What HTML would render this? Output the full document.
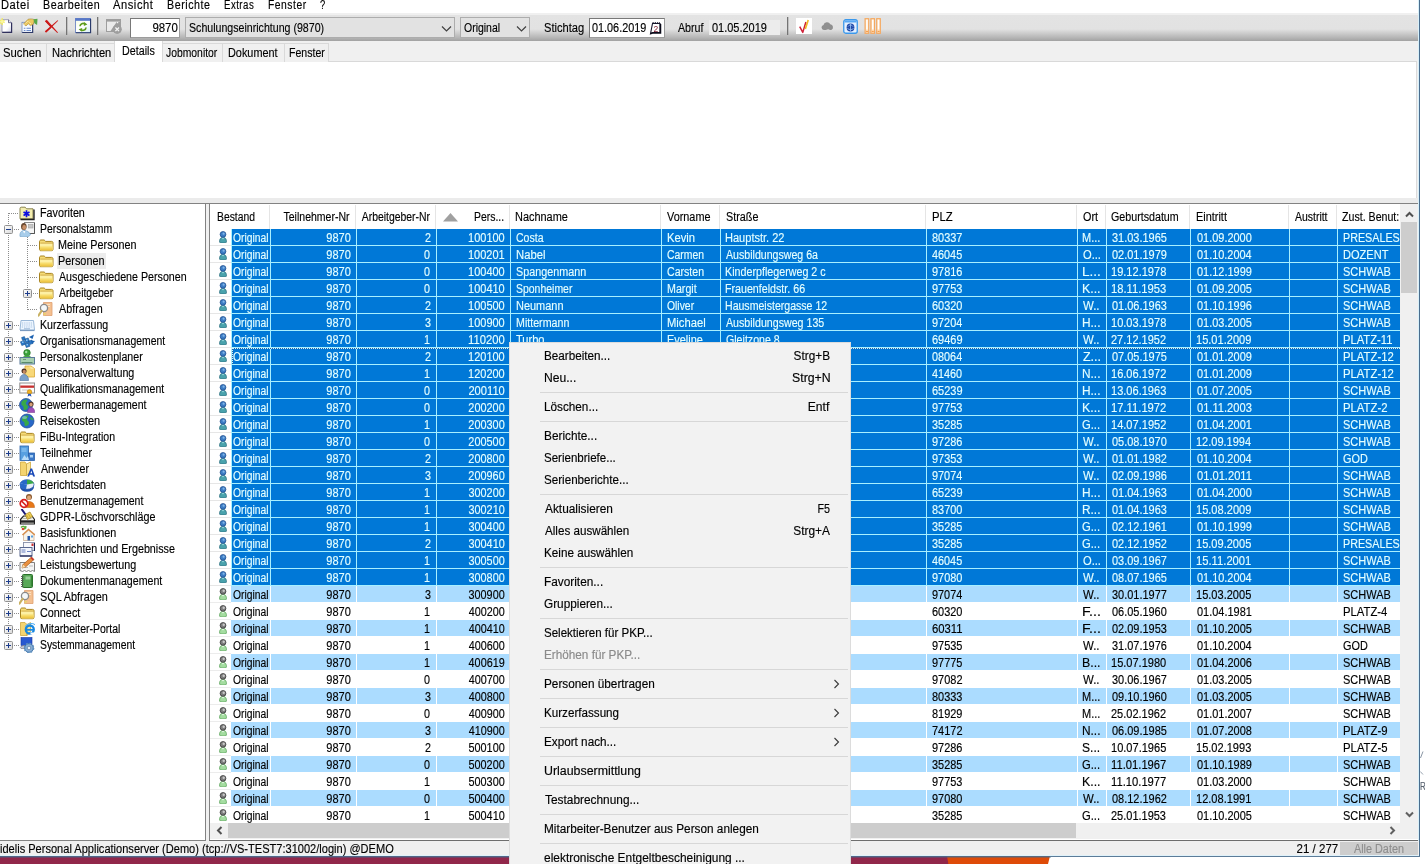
<!DOCTYPE html>
<html lang="de"><head><meta charset="utf-8"><title>fidelis Personal</title>
<style>
html,body{margin:0;padding:0;background:#fff;}
body{width:1425px;height:864px;overflow:hidden;position:relative;font-family:"Liberation Sans",sans-serif;}
#app{position:absolute;left:0;top:0;width:1425px;height:864px;overflow:hidden;will-change:transform;}
#app div,#app span.t,#app svg{position:absolute;box-sizing:border-box;}
span.t{white-space:nowrap;line-height:1;display:block;-webkit-text-stroke:.15px;}
</style></head><body><div id="app">
<svg width="0" height="0" style="left:0;top:0"><defs><linearGradient id="eg" x1="0" y1="0" x2="1" y2="1"><stop offset="0" stop-color="#fff"/><stop offset="1" stop-color="#d8d8d8"/></linearGradient></defs></svg>
<div style="left:0px;top:0px;width:1419px;height:857px;background:#f0f0f0;"></div>
<div style="left:1419px;top:0px;width:1px;height:857px;background:#4a6e8e;"></div>
<div style="left:1418px;top:0px;width:1px;height:857px;background:#d8f0fa;"></div>
<div style="left:0px;top:0px;width:1418px;height:13px;background:#fff;"></div>
<span class="t" style="left:1.11px;top:-1.00px;font-size:12px;color:#000;transform:scaleX(0.9259);transform-origin:0 0;letter-spacing:0.6px;">Datei</span>
<span class="t" style="left:42.54px;top:-1.00px;font-size:12px;color:#000;transform:scaleX(0.8925);transform-origin:0 0;letter-spacing:0.6px;">Bearbeiten</span>
<span class="t" style="left:113.00px;top:-1.00px;font-size:12px;color:#000;transform:scaleX(0.9277);transform-origin:0 0;letter-spacing:0.6px;">Ansicht</span>
<span class="t" style="left:166.55px;top:-1.00px;font-size:12px;color:#000;transform:scaleX(0.8900);transform-origin:0 0;letter-spacing:0.6px;">Berichte</span>
<span class="t" style="left:223.93px;top:-1.00px;font-size:12px;color:#000;transform:scaleX(0.8025);transform-origin:0 0;letter-spacing:0.6px;">Extras</span>
<span class="t" style="left:267.57px;top:-1.00px;font-size:12px;color:#000;transform:scaleX(0.8600);transform-origin:0 0;letter-spacing:0.6px;">Fenster</span>
<span class="t" style="left:319.62px;top:-1.00px;font-size:12px;color:#000;transform:scaleX(0.7812);transform-origin:0 0;letter-spacing:0.6px;">?</span>
<div style="left:0px;top:13px;width:1418px;height:2px;background:#f0f0f0;"></div>
<div style="left:0px;top:15px;width:1418px;height:26px;background:linear-gradient(#e3e3e3 0,#e2e2e2 54%,#cfcfcf 68%,#b8b8b8 85%,#a2a2a2 100%);"></div>
<div style="left:0px;top:41px;width:1418px;height:21px;background:#f0f0f0;"></div>
<div style="left:66px;top:17px;width:1px;height:18px;background:#747474;"></div>
<div style="left:67px;top:17px;width:1px;height:18px;background:#9a9a9a;opacity:.45;"></div>
<div style="left:97px;top:17px;width:1px;height:18px;background:#747474;"></div>
<div style="left:98px;top:17px;width:1px;height:18px;background:#9a9a9a;opacity:.45;"></div>
<div style="left:787px;top:17px;width:1px;height:18px;background:#747474;"></div>
<div style="left:788px;top:17px;width:1px;height:18px;background:#9a9a9a;opacity:.45;"></div>
<div style="left:130px;top:18px;width:50px;height:20px;background:#fff;border:1px solid #787878;border-right-color:#9c9c9c;border-bottom-color:#9c9c9c;"></div>
<span class="t" style="right:1247.10px;top:21.75px;font-size:12.5px;color:#000;transform:scaleX(0.9138);transform-origin:100% 0;">9870</span>
<div style="left:185px;top:17px;width:270px;height:21px;background:#e2e2e2;border:1px solid #adadad;"></div>
<span class="t" style="left:189.02px;top:21.75px;font-size:12.5px;color:#000;transform:scaleX(0.8488);transform-origin:0 0;">Schulungseinrichtung (9870)</span>
<svg style="left:440.5px;top:24.5px;" width="11" height="8" viewBox="0 0 11 8"><path d="M1 1.5 L5.5 6 L10 1.5" fill="none" stroke="#404040" stroke-width="1.2"/></svg>
<div style="left:460px;top:17px;width:70px;height:21px;background:#e2e2e2;border:1px solid #adadad;"></div>
<span class="t" style="left:464.03px;top:21.75px;font-size:12.5px;color:#000;transform:scaleX(0.8383);transform-origin:0 0;">Original</span>
<svg style="left:515.8px;top:24.5px;" width="11" height="8" viewBox="0 0 11 8"><path d="M1 1.5 L5.5 6 L10 1.5" fill="none" stroke="#404040" stroke-width="1.2"/></svg>
<span class="t" style="left:543.80px;top:21.75px;font-size:12.5px;color:#000;transform:scaleX(0.8902);transform-origin:0 0;">Stichtag</span>
<div style="left:589px;top:18px;width:76px;height:20px;background:#fff;border:1px solid #787878;border-right-color:#9c9c9c;border-bottom-color:#9c9c9c;"></div>
<span class="t" style="left:592.42px;top:21.75px;font-size:12.5px;color:#000;transform:scaleX(0.8674);transform-origin:0 0;">01.06.2019</span>
<svg style="left:649px;top:21px;" width="13" height="14" viewBox="0 0 13 14"><path d="M3.500 2.500h7.500v9h-7l-2.500 1.200z" fill="#fff" stroke="#15152a" stroke-width="1.100"/><path d="M11.500 3v9h-8.500l-1.500 1" fill="none" stroke="#0a0a18" stroke-width="1.500"/><path d="M3.500 2h7.500" stroke="#15152a" stroke-width="1.600" stroke-dasharray="1.300 .9"/><text x="4.600" y="10.800" font-size="8.500" font-family="Liberation Sans,sans-serif" fill="#7a1c30">2</text></svg>
<span class="t" style="left:677.70px;top:21.75px;font-size:12.5px;color:#000;transform:scaleX(0.8536);transform-origin:0 0;">Abruf</span>
<div style="left:709px;top:20px;width:71px;height:15px;background:#ececec;"></div>
<span class="t" style="left:711.62px;top:21.75px;font-size:12.5px;color:#000;transform:scaleX(0.8772);transform-origin:0 0;">01.05.2019</span>
<svg style="left:0px;top:17px;" width="14" height="17" viewBox="0 0 14 17"><defs><linearGradient id="nd" x1="0" y1="0" x2="1" y2="1"><stop offset="0" stop-color="#fff"/><stop offset=".6" stop-color="#fff"/><stop offset="1" stop-color="#c8cce0"/></linearGradient></defs><path d="M2 2.700h6.500l3 3v9.600h-9.500z" fill="url(#nd)" stroke="#8a8aa8" stroke-width=".8"/><path d="M8.500 2.700v3h3" fill="#e4e4f0" stroke="#50507a" stroke-width=".8"/><path d="M11.600 5.700v9.700h-9.400" fill="none" stroke="#30305c" stroke-width="1.200"/><path d="M2.200 1v7M0 3.200l4.600 2.400M0 6.400l4.600-3" stroke="#f4ec60" stroke-width="1.300"/><circle cx="2.200" cy="4.500" r="1.500" fill="#fbf7a0"/></svg>
<svg style="left:21px;top:18px;" width="17" height="16" viewBox="0 0 17 16"><rect x="1" y="4.300" width="10.600" height="10" fill="#f6faff" stroke="#7088b8" stroke-width=".8"/><path d="M11.700 4.500v10h-10.500" fill="none" stroke="#2c3868" stroke-width="1.100"/><path d="M2.800 10.300h1.600M5.500 10.300h4.500M2.800 12.500h1.600M5.500 12.500h4.500" stroke="#6c8ccc" stroke-width="1.100"/><path d="M2.500 6l4.500-4.700c2-.6 4.500-.6 6.500.4l-1.200 4.500-2.800 1.500-2.200-2-2.300 2.300z" fill="#ecc860" stroke="#a88838" stroke-width=".6"/><path d="M3.500 6.500l3.500-3.500 3 3" fill="none" stroke="#fff6c8" stroke-width=".9" stroke-dasharray="1 1"/><path d="M12.500 1.300l4-.5-.4 6.200-2.800-1.700z" fill="#58a848"/></svg>
<svg style="left:44px;top:19px;" width="16" height="15" viewBox="0 0 16 15"><path d="M1.200 2.200L2.800.8L14 13.400L13.300 14z" fill="#cc1818"/><path d="M2 13.800L.9 12.200L13.600 1.200L14.200 1.800z" fill="#cc1818"/><path d="M1.500 1.800l6 6.500M1.800 12.800l5.200-4.600" stroke="#cc1818" stroke-width="1.500"/></svg>
<svg style="left:75px;top:18px;" width="17" height="16" viewBox="0 0 17 16"><defs><linearGradient id="rw" x1="0" y1="0" x2="1" y2="1"><stop offset="0" stop-color="#f4fce0"/><stop offset=".5" stop-color="#fff"/><stop offset="1" stop-color="#d8f0f8"/></linearGradient></defs><rect x=".5" y=".5" width="15" height="14" fill="url(#rw)" stroke="#7a90c8"/><rect x=".3" y=".2" width="15.500" height="2.600" fill="#5878c8"/><path d="M15.600 1v13.700H.8" fill="none" stroke="#283868" stroke-width="1.100"/><path d="M5 8.300a3.100 3.100 0 0 1 5-2.200M11 9.500a3.100 3.100 0 0 1-5 2.200" fill="none" stroke="#5c9c1c" stroke-width="1.700"/><path d="M9.200 4l3.200 2.500-3.600 1.400zM6.800 13.800l-3.200-2.500 3.600-1.400z" fill="#5c9c1c"/></svg>
<svg style="left:106px;top:19px;" width="16" height="15" viewBox="0 0 16 15"><rect x="0" y="0" width="15" height="13" fill="#9e9e9e"/><rect x="1" y="2.600" width="13" height="9.400" fill="#ebebeb"/><path d="M3.800 13L10.500 3.200L15 2.600V13z" fill="#9e9e9e"/><circle cx="11.200" cy="10.300" r="4.600" fill="#9e9e9e"/><path d="M9.400 8.500l3.600 3.600M13 8.500l-3.600 3.600" stroke="#f4f4f4" stroke-width="1.300"/><rect x="11" y="3" width="1.200" height="1.200" fill="#f4f4f4"/></svg>
<svg style="left:796px;top:18px;" width="16" height="16" viewBox="0 0 16 16"><rect width="16" height="16" fill="#fff"/><path d="M3.700 8.600L6.800 14.400L9.900 4" stroke="#d02038" stroke-width="1.500" fill="none" stroke-linejoin="round"/><path d="M9.300 11L12.200 2.100" stroke="#f0b828" stroke-width="1.700"/></svg>
<svg style="left:820.5px;top:20.5px;" width="13" height="10" viewBox="0 0 13 10"><path d="M2.800 9a2.600 2.600 0 0 1-.3-5.100a3.600 3.600 0 0 1 6.800-.6a3 3 0 0 1 1 5.700c-1.500.3-2-.8-3.200-.8s-1.800 1-4.300.8z" fill="#8f8f8f"/></svg>
<svg style="left:842.5px;top:18.5px;" width="15" height="15" viewBox="0 0 15 15"><rect x=".75" y=".75" width="13.500" height="13.500" rx="2" fill="#e4f0ff" stroke="#3a98ec" stroke-width="1.300"/><rect x="1.500" y="1.500" width="12" height="2" fill="#58a8f4"/><circle cx="7.500" cy="8.500" r="3.900" fill="#2048a8"/><path d="M5 7.500c1.500-2 3.500-2 5 0M4.500 9.500c2 1.500 4 1.500 6 0M7.500 4.800v7.500" stroke="#9cc4f4" stroke-width=".8" fill="none"/></svg>
<svg style="left:864px;top:18px;" width="18" height="16" viewBox="0 0 18 16"><g fill="#ffe6c8" stroke="#f4a860" stroke-width="1.200"><rect x="1.100" y=".7" width="3.600" height="14.600"/><rect x="6.900" y=".7" width="3.600" height="14.600"/><rect x="12.700" y=".7" width="3.600" height="14.600"/></g><g fill="#fff"><rect x="2.200" y="1.800" width="1.400" height="9.500"/><rect x="8" y="1.800" width="1.400" height="9.500"/><rect x="13.800" y="1.800" width="1.400" height="9.500"/></g><g fill="#f4a050"><rect x="2" y="12.800" width="2" height="1.300"/><rect x="7.800" y="12.800" width="2" height="1.300"/><rect x="13.600" y="12.800" width="2" height="1.300"/></g></svg>
<div style="left:0px;top:61px;width:1417px;height:1px;background:#d9d9d9;"></div>
<div style="left:-1px;top:43px;width:48px;height:19px;border:1px solid #d9d9d9;border-bottom:none;background:#f0f0f0;"></div>
<span class="t" style="left:2.89px;top:46.75px;font-size:12.5px;color:#000;transform:scaleX(0.9035);transform-origin:0 0;">Suchen</span>
<div style="left:46px;top:43px;width:69px;height:19px;border:1px solid #d9d9d9;border-bottom:none;background:#f0f0f0;"></div>
<span class="t" style="left:51.71px;top:46.75px;font-size:12.5px;color:#000;transform:scaleX(0.8885);transform-origin:0 0;">Nachrichten</span>
<div style="left:114px;top:41px;width:49px;height:21px;background:#fff;border:1px solid #d9d9d9;border-bottom:none;border-top:none;"></div>
<span class="t" style="left:121.84px;top:44.75px;font-size:12.5px;color:#000;transform:scaleX(0.8571);transform-origin:0 0;">Details</span>
<div style="left:162px;top:43px;width:61px;height:19px;border:1px solid #d9d9d9;border-bottom:none;background:#f0f0f0;"></div>
<span class="t" style="left:165.84px;top:46.75px;font-size:12.5px;color:#000;transform:scaleX(0.8293);transform-origin:0 0;">Jobmonitor</span>
<div style="left:222px;top:43px;width:63px;height:19px;border:1px solid #d9d9d9;border-bottom:none;background:#f0f0f0;"></div>
<span class="t" style="left:228.43px;top:46.75px;font-size:12.5px;color:#000;transform:scaleX(0.8706);transform-origin:0 0;">Dokument</span>
<div style="left:284px;top:43px;width:45px;height:19px;border:1px solid #d9d9d9;border-bottom:none;background:#f0f0f0;"></div>
<span class="t" style="left:289.36px;top:46.75px;font-size:12.5px;color:#000;transform:scaleX(0.8449);transform-origin:0 0;">Fenster</span>
<div style="left:0px;top:62px;width:1417px;height:136px;background:#fff;border-right:1px solid #dcdcdc;"></div>
<div style="left:0px;top:198px;width:1418px;height:5px;background:#ebebeb;"></div>
<div style="left:0px;top:203px;width:1418px;height:1px;background:#828282;"></div>
<div style="left:0px;top:204px;width:205px;height:636px;background:#fff;"></div>
<div style="left:205px;top:204px;width:1px;height:637px;background:#828282;"></div>
<div style="left:0px;top:840px;width:206px;height:1px;background:#828282;"></div>
<div style="left:206px;top:204px;width:3px;height:637px;background:#f0f0f0;"></div>
<div style="left:8px;top:213px;width:1px;height:432px;background:repeating-linear-gradient(to bottom,#8c8c8c 0,#8c8c8c 1px,transparent 1px,transparent 2px);"></div>
<div style="left:27px;top:237px;width:1px;height:73px;background:repeating-linear-gradient(to bottom,#8c8c8c 0,#8c8c8c 1px,transparent 1px,transparent 2px);"></div>
<div style="left:9px;top:213px;width:10px;height:1px;background:repeating-linear-gradient(to right,#8c8c8c 0,#8c8c8c 1px,transparent 1px,transparent 2px);"></div>
<svg style="left:19px;top:205px;" width="16" height="16" viewBox="0 0 16 16"><path d="M1 3.500c0-.8.500-1.300 1.200-1.300h4l1.300 1.600h6.500v10h-13z" fill="#f4eeb0" stroke="#8a8450" stroke-width="1"/><path d="M1.500 14.500h13.500v-10" fill="none" stroke="#222" stroke-width="1.400"/><g stroke="#1010e0" stroke-width="1.700"><path d="M7.500 5.200v7M4.500 6.900l6 3.600M10.500 6.900l-6 3.600"/></g></svg>
<span class="t" style="left:39.84px;top:206.75px;font-size:12.5px;color:#000;transform:scaleX(0.8606);transform-origin:0 0;">Favoriten</span>
<div style="left:14px;top:229px;width:5px;height:1px;background:repeating-linear-gradient(to right,#8c8c8c 0,#8c8c8c 1px,transparent 1px,transparent 2px);"></div>
<svg style="left:4px;top:225px;" width="9" height="9" viewBox="0 0 9 9"><rect x=".5" y=".5" width="8" height="8" rx="1" fill="url(#eg)" stroke="#919191"/><path d="M2 4.500h5" stroke="#1c3c8c" stroke-width="1"/></svg>
<svg style="left:19px;top:221px;" width="16" height="16" viewBox="0 0 16 16"><rect x="5.500" y="1.500" width="10" height="11" fill="#f6f6f6" stroke="#8a8a8a"/><rect x="9.500" y="3.500" width="4.500" height="3.500" fill="#c8c8c8" stroke="#a0a0a0" stroke-width=".6"/><path d="M15.500 2v10.500h-9" fill="none" stroke="#555" stroke-width="1"/><ellipse cx="4.800" cy="5.500" rx="2.800" ry="3.600" fill="#6a4a32"/><ellipse cx="5.200" cy="6.200" rx="1.900" ry="2.500" fill="#c89068"/><path d="M1 15.500c-.500-4 1.500-6 4-6s5.500 1.500 6.500 4c-1 2-3 2.500-5 2.500z" fill="#a8cdea" stroke="#7aa6cc" stroke-width=".7"/><path d="M4 10l1.200 2.500 1.200-2.500z" fill="#fff"/></svg>
<span class="t" style="left:39.87px;top:222.75px;font-size:12.5px;color:#000;transform:scaleX(0.8300);transform-origin:0 0;">Personalstamm</span>
<div style="left:28px;top:245px;width:10px;height:1px;background:repeating-linear-gradient(to right,#8c8c8c 0,#8c8c8c 1px,transparent 1px,transparent 2px);"></div>
<svg style="left:38px;top:237px;" width="16" height="16" viewBox="0 0 16 16"><path d="M1.500 5c0-1.200.5-2 1.500-2h3.200l1.400 1.400h6c1 0 1.400.6 1.400 1.400v6.400c0 1-.5 1.500-1.400 1.500h-10.700c-.9 0-1.400-.5-1.400-1.500z" fill="#f6dc78" stroke="#a88420" stroke-width="1"/><path d="M2 7.200c0-.6.300-.9.900-.9h10.700c.6 0 .9.300.9.900v4.900c0 .7-.3 1.100-.9 1.100h-10.700c-.6 0-.9-.4-.9-1.100z" fill="#fdf0a4"/><path d="M2 9.500h12.500v2.600c0 .7-.3 1.100-.9 1.100h-10.700c-.6 0-.9-.4-.9-1.100z" fill="#f7dc6c"/><path d="M2 11.500h12.500v.6c0 .7-.3 1.100-.9 1.100h-10.700c-.6 0-.9-.4-.9-1.100z" fill="#f0c848"/><path d="M2.300 6.100h12" stroke="#c8a03c" stroke-width=".8"/></svg>
<span class="t" style="left:58.44px;top:238.75px;font-size:12.5px;color:#000;transform:scaleX(0.8627);transform-origin:0 0;">Meine Personen</span>
<div style="left:28px;top:261px;width:10px;height:1px;background:repeating-linear-gradient(to right,#8c8c8c 0,#8c8c8c 1px,transparent 1px,transparent 2px);"></div>
<div style="left:57px;top:253px;width:49px;height:16px;background:#ececec;"></div>
<svg style="left:38px;top:253px;" width="16" height="16" viewBox="0 0 16 16"><path d="M1.500 5c0-1.200.5-2 1.500-2h3.200l1.400 1.400h6c1 0 1.400.6 1.400 1.400v6.400c0 1-.5 1.500-1.400 1.500h-10.700c-.9 0-1.400-.5-1.400-1.500z" fill="#f6dc78" stroke="#a88420" stroke-width="1"/><path d="M2 7.200c0-.6.300-.9.900-.9h10.700c.6 0 .9.300.9.900v4.900c0 .7-.3 1.100-.9 1.100h-10.700c-.6 0-.9-.4-.9-1.100z" fill="#fdf0a4"/><path d="M2 9.500h12.500v2.600c0 .7-.3 1.100-.9 1.100h-10.700c-.6 0-.9-.4-.9-1.100z" fill="#f7dc6c"/><path d="M2 11.500h12.500v.6c0 .7-.3 1.100-.9 1.100h-10.700c-.6 0-.9-.4-.9-1.100z" fill="#f0c848"/><path d="M2.300 6.100h12" stroke="#c8a03c" stroke-width=".8"/></svg>
<span class="t" style="left:58.43px;top:254.75px;font-size:12.5px;color:#000;transform:scaleX(0.8696);transform-origin:0 0;">Personen</span>
<div style="left:28px;top:277px;width:10px;height:1px;background:repeating-linear-gradient(to right,#8c8c8c 0,#8c8c8c 1px,transparent 1px,transparent 2px);"></div>
<svg style="left:38px;top:269px;" width="16" height="16" viewBox="0 0 16 16"><path d="M1.500 5c0-1.200.5-2 1.500-2h3.200l1.400 1.400h6c1 0 1.400.6 1.400 1.400v6.400c0 1-.5 1.500-1.400 1.500h-10.700c-.9 0-1.400-.5-1.400-1.500z" fill="#f6dc78" stroke="#a88420" stroke-width="1"/><path d="M2 7.200c0-.6.300-.9.900-.9h10.700c.6 0 .9.300.9.900v4.900c0 .7-.3 1.100-.9 1.100h-10.700c-.6 0-.9-.4-.9-1.100z" fill="#fdf0a4"/><path d="M2 9.500h12.500v2.600c0 .7-.3 1.100-.9 1.100h-10.700c-.6 0-.9-.4-.9-1.100z" fill="#f7dc6c"/><path d="M2 11.500h12.500v.6c0 .7-.3 1.100-.9 1.100h-10.700c-.6 0-.9-.4-.9-1.100z" fill="#f0c848"/><path d="M2.300 6.100h12" stroke="#c8a03c" stroke-width=".8"/></svg>
<span class="t" style="left:59.30px;top:270.75px;font-size:12.5px;color:#000;transform:scaleX(0.8545);transform-origin:0 0;">Ausgeschiedene Personen</span>
<div style="left:33px;top:293px;width:5px;height:1px;background:repeating-linear-gradient(to right,#8c8c8c 0,#8c8c8c 1px,transparent 1px,transparent 2px);"></div>
<svg style="left:23px;top:289px;" width="9" height="9" viewBox="0 0 9 9"><rect x=".5" y=".5" width="8" height="8" rx="1" fill="url(#eg)" stroke="#919191"/><path d="M2 4.500h5" stroke="#1c3c8c" stroke-width="1"/><path d="M4.500 2v5" stroke="#1c3c8c" stroke-width="1"/></svg>
<svg style="left:38px;top:285px;" width="16" height="16" viewBox="0 0 16 16"><path d="M1.500 5c0-1.200.5-2 1.500-2h3.200l1.400 1.400h6c1 0 1.400.6 1.400 1.400v6.400c0 1-.5 1.500-1.400 1.500h-10.700c-.9 0-1.400-.5-1.400-1.500z" fill="#f6dc78" stroke="#a88420" stroke-width="1"/><path d="M2 7.200c0-.6.300-.9.900-.9h10.700c.6 0 .9.300.9.900v4.900c0 .7-.3 1.100-.9 1.100h-10.700c-.6 0-.9-.4-.9-1.100z" fill="#fdf0a4"/><path d="M2 9.500h12.500v2.600c0 .7-.3 1.100-.9 1.100h-10.700c-.6 0-.9-.4-.9-1.100z" fill="#f7dc6c"/><path d="M2 11.500h12.500v.6c0 .7-.3 1.100-.9 1.100h-10.700c-.6 0-.9-.4-.9-1.100z" fill="#f0c848"/><path d="M2.300 6.100h12" stroke="#c8a03c" stroke-width=".8"/></svg>
<span class="t" style="left:59.30px;top:286.75px;font-size:12.5px;color:#000;transform:scaleX(0.8380);transform-origin:0 0;">Arbeitgeber</span>
<div style="left:28px;top:309px;width:10px;height:1px;background:repeating-linear-gradient(to right,#8c8c8c 0,#8c8c8c 1px,transparent 1px,transparent 2px);"></div>
<svg style="left:38px;top:301px;" width="16" height="16" viewBox="0 0 16 16"><path d="M5.500 1.500h8.500v13h-8.500z" fill="#f4c090" stroke="#e0a070" stroke-width=".8"/><path d="M7 3.500h5M7 5.500h5" stroke="#fbe0c0" stroke-width="1"/><circle cx="6" cy="7" r="3.600" fill="#f4f8fa" stroke="#8a8a8a" stroke-width="1.300"/><path d="M3.500 10l-3 4.500" stroke="#c8b060" stroke-width="2.200" stroke-linecap="round"/><path d="M5 12l1.500 3 2-3z" fill="#e8d070"/></svg>
<span class="t" style="left:59.30px;top:302.75px;font-size:12.5px;color:#000;transform:scaleX(0.8600);transform-origin:0 0;">Abfragen</span>
<div style="left:14px;top:325px;width:5px;height:1px;background:repeating-linear-gradient(to right,#8c8c8c 0,#8c8c8c 1px,transparent 1px,transparent 2px);"></div>
<svg style="left:4px;top:321px;" width="9" height="9" viewBox="0 0 9 9"><rect x=".5" y=".5" width="8" height="8" rx="1" fill="url(#eg)" stroke="#919191"/><path d="M2 4.500h5" stroke="#1c3c8c" stroke-width="1"/><path d="M4.500 2v5" stroke="#1c3c8c" stroke-width="1"/></svg>
<svg style="left:19px;top:317px;" width="16" height="16" viewBox="0 0 16 16"><path d="M2 3.500h12.500l1 9.500h-14.500z" fill="#eef6ff" stroke="#9ab8d8" stroke-width="1"/><path d="M1 13.500h14.500" stroke="#7a9ac0" stroke-width="1.200"/><g stroke="#a8c4e0" stroke-width="1.100" stroke-dasharray="1.200 1"><path d="M3 6h10.500M3 8h10.800M2.800 10h11.200"/></g><path d="M5 11.800h6" stroke="#9ab8d8" stroke-width="1"/></svg>
<span class="t" style="left:39.85px;top:318.75px;font-size:12.5px;color:#000;transform:scaleX(0.8463);transform-origin:0 0;">Kurzerfassung</span>
<div style="left:14px;top:341px;width:5px;height:1px;background:repeating-linear-gradient(to right,#8c8c8c 0,#8c8c8c 1px,transparent 1px,transparent 2px);"></div>
<svg style="left:4px;top:337px;" width="9" height="9" viewBox="0 0 9 9"><rect x=".5" y=".5" width="8" height="8" rx="1" fill="url(#eg)" stroke="#919191"/><path d="M2 4.500h5" stroke="#1c3c8c" stroke-width="1"/><path d="M4.500 2v5" stroke="#1c3c8c" stroke-width="1"/></svg>
<svg style="left:19px;top:333px;" width="16" height="16" viewBox="0 0 16 16"><g fill="#2a78c8" stroke="#15508a" stroke-width=".5"><rect x="2" y="8" width="4" height="4" transform="rotate(-20 4 10)"/><rect x="6" y="5.500" width="4" height="4" transform="rotate(-20 8 7.500)"/><rect x="6.500" y="10" width="4" height="4" transform="rotate(-20 8.500 12)"/><rect x="10" y="7.500" width="3.500" height="3.500" transform="rotate(-20 12 9)"/><rect x="3" y="4" width="3" height="3" transform="rotate(-20 4.500 5.500)"/></g><path d="M10 4l5-2.500-1.500 4.500z" fill="#1a60b0"/><path d="M12 7.500l4 .5-3 3z" fill="#1a60b0"/><g fill="#8ac4f0"><rect x="3" y="8.500" width="1.500" height="1.500"/><rect x="7" y="6.500" width="1.500" height="1.500"/><rect x="7.500" y="11" width="1.500" height="1.500"/></g></svg>
<span class="t" style="left:40.23px;top:334.75px;font-size:12.5px;color:#000;transform:scaleX(0.8341);transform-origin:0 0;">Organisationsmanagement</span>
<div style="left:14px;top:357px;width:5px;height:1px;background:repeating-linear-gradient(to right,#8c8c8c 0,#8c8c8c 1px,transparent 1px,transparent 2px);"></div>
<svg style="left:4px;top:353px;" width="9" height="9" viewBox="0 0 9 9"><rect x=".5" y=".5" width="8" height="8" rx="1" fill="url(#eg)" stroke="#919191"/><path d="M2 4.500h5" stroke="#1c3c8c" stroke-width="1"/><path d="M4.500 2v5" stroke="#1c3c8c" stroke-width="1"/></svg>
<svg style="left:19px;top:349px;" width="16" height="16" viewBox="0 0 16 16"><circle cx="8" cy="3.800" r="3.300" fill="#38a038" stroke="#1f6a1f" stroke-width=".6"/><circle cx="7.200" cy="3" r="1.200" fill="#a0e0a0"/><path d="M2.500 11c0-3 2.500-4.500 5.500-4.500s5.500 1.500 5.500 4.500z" fill="#48a848"/><rect x="1" y="8.500" width="14.500" height="6.500" fill="#a8d0b0" stroke="#5a7a9a" stroke-width="1"/><path d="M2.500 13.500h11" stroke="#5a8a6a" stroke-width="1"/><path d="M4 10.500h3" stroke="#6a9a7a" stroke-width="1"/></svg>
<span class="t" style="left:39.85px;top:350.75px;font-size:12.5px;color:#000;transform:scaleX(0.8493);transform-origin:0 0;">Personalkostenplaner</span>
<div style="left:14px;top:373px;width:5px;height:1px;background:repeating-linear-gradient(to right,#8c8c8c 0,#8c8c8c 1px,transparent 1px,transparent 2px);"></div>
<svg style="left:4px;top:369px;" width="9" height="9" viewBox="0 0 9 9"><rect x=".5" y=".5" width="8" height="8" rx="1" fill="url(#eg)" stroke="#919191"/><path d="M2 4.500h5" stroke="#1c3c8c" stroke-width="1"/><path d="M4.500 2v5" stroke="#1c3c8c" stroke-width="1"/></svg>
<svg style="left:19px;top:365px;" width="16" height="16" viewBox="0 0 16 16"><path d="M6 1h6l3.500 2.500v8.500h-9.500z" fill="#f8d878" stroke="#d8a838" stroke-width=".8"/><path d="M10 1.500l3 .5 2 2-3 0z" fill="#fce8a0"/><circle cx="5" cy="6" r="2.500" fill="#4a3020"/><ellipse cx="5.300" cy="6.700" rx="1.600" ry="1.900" fill="#c08860"/><path d="M.8 15.500c0-4 1.700-6 4.200-6s4.500 2 4.500 6z" fill="#7aa0c8" stroke="#4a70a0" stroke-width=".6"/></svg>
<span class="t" style="left:39.84px;top:366.75px;font-size:12.5px;color:#000;transform:scaleX(0.8593);transform-origin:0 0;">Personalverwaltung</span>
<div style="left:14px;top:389px;width:5px;height:1px;background:repeating-linear-gradient(to right,#8c8c8c 0,#8c8c8c 1px,transparent 1px,transparent 2px);"></div>
<svg style="left:4px;top:385px;" width="9" height="9" viewBox="0 0 9 9"><rect x=".5" y=".5" width="8" height="8" rx="1" fill="url(#eg)" stroke="#919191"/><path d="M2 4.500h5" stroke="#1c3c8c" stroke-width="1"/><path d="M4.500 2v5" stroke="#1c3c8c" stroke-width="1"/></svg>
<svg style="left:19px;top:381px;" width="16" height="16" viewBox="0 0 16 16"><rect x=".8" y="2" width="14.700" height="10" fill="#fcfcfc" stroke="#909090" stroke-width="1"/><rect x="1.300" y="4.500" width="13.700" height="2.300" fill="#c83030"/><path d="M3 9h9" stroke="#c8c8c8" stroke-width="1"/><circle cx="10.500" cy="11" r="2.300" fill="#f0b020" stroke="#c08000" stroke-width=".6"/><path d="M9.300 12.800l-.8 3 2-1.200 2 1.200-.8-3z" fill="#2858c0"/></svg>
<span class="t" style="left:40.23px;top:382.75px;font-size:12.5px;color:#000;transform:scaleX(0.8387);transform-origin:0 0;">Qualifikationsmanagement</span>
<div style="left:14px;top:405px;width:5px;height:1px;background:repeating-linear-gradient(to right,#8c8c8c 0,#8c8c8c 1px,transparent 1px,transparent 2px);"></div>
<svg style="left:4px;top:401px;" width="9" height="9" viewBox="0 0 9 9"><rect x=".5" y=".5" width="8" height="8" rx="1" fill="url(#eg)" stroke="#919191"/><path d="M2 4.500h5" stroke="#1c3c8c" stroke-width="1"/><path d="M4.500 2v5" stroke="#1c3c8c" stroke-width="1"/></svg>
<svg style="left:19px;top:397px;" width="16" height="16" viewBox="0 0 16 16"><circle cx="7" cy="8" r="6.500" fill="#2868c8" stroke="#184890" stroke-width=".7"/><path d="M2.500 5c2-2.500 4.500-3 6-2-.5 2-1.500 2-1.500 3.500 0 1.500 2 1.500 2 3.500s-2.500 3.500-4 3c-1-1.500 0-3-1-4s-2-.5-1.500-4z" fill="#38a848"/><circle cx="12" cy="7" r="2.600" fill="#5a3828"/><ellipse cx="12" cy="7.600" rx="1.600" ry="1.900" fill="#d8a078"/><path d="M8.500 15.500c0-3.500 1.500-5 3.500-5s3.800 1.500 3.800 5z" fill="#a050b8" stroke="#703088" stroke-width=".5"/></svg>
<span class="t" style="left:39.86px;top:398.75px;font-size:12.5px;color:#000;transform:scaleX(0.8419);transform-origin:0 0;">Bewerbermanagement</span>
<div style="left:14px;top:421px;width:5px;height:1px;background:repeating-linear-gradient(to right,#8c8c8c 0,#8c8c8c 1px,transparent 1px,transparent 2px);"></div>
<svg style="left:4px;top:417px;" width="9" height="9" viewBox="0 0 9 9"><rect x=".5" y=".5" width="8" height="8" rx="1" fill="url(#eg)" stroke="#919191"/><path d="M2 4.500h5" stroke="#1c3c8c" stroke-width="1"/><path d="M4.500 2v5" stroke="#1c3c8c" stroke-width="1"/></svg>
<svg style="left:19px;top:413px;" width="16" height="16" viewBox="0 0 16 16"><circle cx="8" cy="8" r="7" fill="#2868c8" stroke="#184890" stroke-width=".7"/><path d="M3 5c2-2.500 5-3 6.500-2-.5 2-1.500 2-1.500 3.500 0 1.500 2 1.500 2 3.500s-2.500 3.500-4 3c-1-1.500 0-3-1-4s-2.500-.5-2-4z" fill="#38a848"/><path d="M11 4c1.500 0 3 1.500 3.500 3-1 .5-2.500 0-3-1z" fill="#38a848"/><ellipse cx="5.500" cy="4.500" rx="2.500" ry="1.500" fill="#a0d0f8" opacity=".55"/></svg>
<span class="t" style="left:39.83px;top:414.75px;font-size:12.5px;color:#000;transform:scaleX(0.8746);transform-origin:0 0;">Reisekosten</span>
<div style="left:14px;top:437px;width:5px;height:1px;background:repeating-linear-gradient(to right,#8c8c8c 0,#8c8c8c 1px,transparent 1px,transparent 2px);"></div>
<svg style="left:4px;top:433px;" width="9" height="9" viewBox="0 0 9 9"><rect x=".5" y=".5" width="8" height="8" rx="1" fill="url(#eg)" stroke="#919191"/><path d="M2 4.500h5" stroke="#1c3c8c" stroke-width="1"/><path d="M4.500 2v5" stroke="#1c3c8c" stroke-width="1"/></svg>
<svg style="left:19px;top:429px;" width="16" height="16" viewBox="0 0 16 16"><path d="M1.500 5c0-1.200.5-2 1.500-2h3.200l1.400 1.400h6c1 0 1.400.6 1.400 1.400v6.400c0 1-.5 1.500-1.400 1.500h-10.700c-.9 0-1.400-.5-1.400-1.500z" fill="#f6dc78" stroke="#a88420" stroke-width="1"/><path d="M2 7.200c0-.6.300-.9.900-.9h10.700c.6 0 .9.300.9.900v4.900c0 .7-.3 1.100-.9 1.100h-10.700c-.6 0-.9-.4-.9-1.100z" fill="#fdf0a4"/><path d="M2 9.500h12.500v2.600c0 .7-.3 1.100-.9 1.100h-10.700c-.6 0-.9-.4-.9-1.100z" fill="#f7dc6c"/><path d="M2 11.500h12.500v.6c0 .7-.3 1.100-.9 1.100h-10.700c-.6 0-.9-.4-.9-1.100z" fill="#f0c848"/><path d="M2.300 6.100h12" stroke="#c8a03c" stroke-width=".8"/></svg>
<span class="t" style="left:39.86px;top:430.75px;font-size:12.5px;color:#000;transform:scaleX(0.8442);transform-origin:0 0;">FiBu-Integration</span>
<div style="left:14px;top:453px;width:5px;height:1px;background:repeating-linear-gradient(to right,#8c8c8c 0,#8c8c8c 1px,transparent 1px,transparent 2px);"></div>
<svg style="left:4px;top:449px;" width="9" height="9" viewBox="0 0 9 9"><rect x=".5" y=".5" width="8" height="8" rx="1" fill="url(#eg)" stroke="#919191"/><path d="M2 4.500h5" stroke="#1c3c8c" stroke-width="1"/><path d="M4.500 2v5" stroke="#1c3c8c" stroke-width="1"/></svg>
<svg style="left:19px;top:445px;" width="16" height="16" viewBox="0 0 16 16"><rect x="1" y="1" width="8.500" height="14.500" fill="#58a0e0" stroke="#2a60a8" stroke-width=".8"/><rect x="9.500" y="8" width="6" height="7.500" fill="#3a78c8" stroke="#2a60a8" stroke-width=".8"/><path d="M2.500 15l3-5 2 3 1.500-2 1 4z" fill="#b8dcf8"/><rect x="11" y="10" width="3" height="2.500" fill="#a8d0f4"/><rect x="2.500" y="3" width="5" height="4" fill="#88c0f0" opacity=".7"/></svg>
<span class="t" style="left:40.49px;top:446.75px;font-size:12.5px;color:#000;transform:scaleX(0.8510);transform-origin:0 0;">Teilnehmer</span>
<div style="left:14px;top:469px;width:5px;height:1px;background:repeating-linear-gradient(to right,#8c8c8c 0,#8c8c8c 1px,transparent 1px,transparent 2px);"></div>
<svg style="left:4px;top:465px;" width="9" height="9" viewBox="0 0 9 9"><rect x=".5" y=".5" width="8" height="8" rx="1" fill="url(#eg)" stroke="#919191"/><path d="M2 4.500h5" stroke="#1c3c8c" stroke-width="1"/><path d="M4.500 2v5" stroke="#1c3c8c" stroke-width="1"/></svg>
<svg style="left:19px;top:461px;" width="16" height="16" viewBox="0 0 16 16"><path d="M1.500 1h4.500l1.500 2v11.500h-6z" fill="#f4d470" stroke="#c8a030" stroke-width=".7"/><path d="M7.500 3l4-2v10l-4 3.500z" fill="#fae498" stroke="#c8a030" stroke-width=".7"/><path d="M8.300 15.500l3.200-8h1.600l3 8h-2l-.6-1.800h-2.800l-.6 1.800zM11.400 12.200h1.800l-.9-2.700z" fill="#1848b8"/></svg>
<span class="t" style="left:40.70px;top:462.75px;font-size:12.5px;color:#000;transform:scaleX(0.8517);transform-origin:0 0;">Anwender</span>
<div style="left:14px;top:485px;width:5px;height:1px;background:repeating-linear-gradient(to right,#8c8c8c 0,#8c8c8c 1px,transparent 1px,transparent 2px);"></div>
<svg style="left:4px;top:481px;" width="9" height="9" viewBox="0 0 9 9"><rect x=".5" y=".5" width="8" height="8" rx="1" fill="url(#eg)" stroke="#919191"/><path d="M2 4.500h5" stroke="#1c3c8c" stroke-width="1"/><path d="M4.500 2v5" stroke="#1c3c8c" stroke-width="1"/></svg>
<svg style="left:19px;top:477px;" width="16" height="16" viewBox="0 0 16 16"><ellipse cx="8" cy="10" rx="7" ry="4.800" fill="#2050a8"/><ellipse cx="8" cy="7.500" rx="7" ry="4.800" fill="#e8eef8" stroke="#2050a8" stroke-width=".7"/><path d="M8 7.500l-7-1c.8-2.500 3.500-3.800 7-3.800z" fill="#2868c8"/><path d="M8 7.500v-4.800c3.500 0 6 1.300 6.800 3.500z" fill="#38a848"/><path d="M8 7.500l-7-1c-.5 3 2 5.600 6 5.800z" fill="#2868c8"/></svg>
<span class="t" style="left:39.84px;top:478.75px;font-size:12.5px;color:#000;transform:scaleX(0.8623);transform-origin:0 0;">Berichtsdaten</span>
<div style="left:14px;top:501px;width:5px;height:1px;background:repeating-linear-gradient(to right,#8c8c8c 0,#8c8c8c 1px,transparent 1px,transparent 2px);"></div>
<svg style="left:4px;top:497px;" width="9" height="9" viewBox="0 0 9 9"><rect x=".5" y=".5" width="8" height="8" rx="1" fill="url(#eg)" stroke="#919191"/><path d="M2 4.500h5" stroke="#1c3c8c" stroke-width="1"/><path d="M4.500 2v5" stroke="#1c3c8c" stroke-width="1"/></svg>
<svg style="left:19px;top:493px;" width="16" height="16" viewBox="0 0 16 16"><circle cx="10" cy="4" r="3" fill="#8a5a30"/><ellipse cx="10" cy="4.800" rx="2" ry="2.300" fill="#e0a878"/><path d="M5 14.500c0-4 2-6 5-6s5.500 2 5.500 6z" fill="#e87818" stroke="#b85808" stroke-width=".5"/><circle cx="5" cy="10.500" r="3.800" fill="#fff" stroke="#d82020" stroke-width="1.700"/><path d="M2.500 8l5 5" stroke="#d82020" stroke-width="1.700"/></svg>
<span class="t" style="left:39.86px;top:494.75px;font-size:12.5px;color:#000;transform:scaleX(0.8406);transform-origin:0 0;">Benutzermanagement</span>
<div style="left:14px;top:517px;width:5px;height:1px;background:repeating-linear-gradient(to right,#8c8c8c 0,#8c8c8c 1px,transparent 1px,transparent 2px);"></div>
<svg style="left:4px;top:513px;" width="9" height="9" viewBox="0 0 9 9"><rect x=".5" y=".5" width="8" height="8" rx="1" fill="url(#eg)" stroke="#919191"/><path d="M2 4.500h5" stroke="#1c3c8c" stroke-width="1"/><path d="M4.500 2v5" stroke="#1c3c8c" stroke-width="1"/></svg>
<svg style="left:19px;top:509px;" width="16" height="16" viewBox="0 0 16 16"><path d="M1.500 10.500l3-3.500h8.500l2.500 3.500v4.500h-14z" fill="#f0f0e8" stroke="#222" stroke-width="1.200"/><path d="M1.500 12.500h14" stroke="#222" stroke-width="2.400"/><path d="M3.500 9.500h9" stroke="#b8b8a8" stroke-width="1"/><path d="M6 5.500l5-2.500 2.500 4.500-5 3z" fill="#f0d050" stroke="#a08020" stroke-width=".7"/><path d="M7.500 6l2 3.500M9.500 5l2 3.500" stroke="#b89830" stroke-width=".7"/><path d="M2.500 0l4 5.500" stroke="#181878" stroke-width="2"/></svg>
<span class="t" style="left:40.16px;top:510.75px;font-size:12.5px;color:#000;transform:scaleX(0.8606);transform-origin:0 0;">GDPR-Löschvorschläge</span>
<div style="left:14px;top:533px;width:5px;height:1px;background:repeating-linear-gradient(to right,#8c8c8c 0,#8c8c8c 1px,transparent 1px,transparent 2px);"></div>
<svg style="left:4px;top:529px;" width="9" height="9" viewBox="0 0 9 9"><rect x=".5" y=".5" width="8" height="8" rx="1" fill="url(#eg)" stroke="#919191"/><path d="M2 4.500h5" stroke="#1c3c8c" stroke-width="1"/><path d="M4.500 2v5" stroke="#1c3c8c" stroke-width="1"/></svg>
<svg style="left:19px;top:525px;" width="16" height="16" viewBox="0 0 16 16"><path d="M2 2.500c2-2 4-1 4.500 1M6.500 3.500l-2.500.5M6.500 3.500l.5-2.500" stroke="#58b038" stroke-width="1.400" fill="none"/><circle cx="4" cy="4" r="1.300" fill="#d84830"/><path d="M4.500 9.500l5-4.500 5.500 4.500v6h-10.500z" fill="#f8f4ec" stroke="#c8a888" stroke-width=".7"/><path d="M3.500 10l6-5.500 6.500 5.500" fill="none" stroke="#d89050" stroke-width="1.600"/><rect x="8.500" y="11" width="2.500" height="4.500" fill="#2858a8"/><rect x="12" y="10.500" width="2" height="2" fill="#58a0e0"/></svg>
<span class="t" style="left:39.84px;top:526.75px;font-size:12.5px;color:#000;transform:scaleX(0.8636);transform-origin:0 0;">Basisfunktionen</span>
<div style="left:14px;top:549px;width:5px;height:1px;background:repeating-linear-gradient(to right,#8c8c8c 0,#8c8c8c 1px,transparent 1px,transparent 2px);"></div>
<svg style="left:4px;top:545px;" width="9" height="9" viewBox="0 0 9 9"><rect x=".5" y=".5" width="8" height="8" rx="1" fill="url(#eg)" stroke="#919191"/><path d="M2 4.500h5" stroke="#1c3c8c" stroke-width="1"/><path d="M4.500 2v5" stroke="#1c3c8c" stroke-width="1"/></svg>
<svg style="left:19px;top:541px;" width="16" height="16" viewBox="0 0 16 16"><rect x="4.500" y="1.500" width="11" height="8" fill="#f8f8fc" stroke="#8890a8" stroke-width=".9"/><rect x="12.500" y="2.500" width="2" height="2.500" fill="#c83030"/><path d="M15.500 2v8" stroke="#1a2050" stroke-width="1.200"/><rect x="1" y="6.500" width="12" height="8.500" fill="#f4f6fc" stroke="#5a6890" stroke-width="1"/><path d="M2.500 9h4M2.500 11h4M8 10.500h4" stroke="#6a80c0" stroke-width="1"/><path d="M1 15h12" stroke="#2a3060" stroke-width="1.300"/></svg>
<span class="t" style="left:39.84px;top:542.75px;font-size:12.5px;color:#000;transform:scaleX(0.8592);transform-origin:0 0;">Nachrichten und Ergebnisse</span>
<div style="left:14px;top:565px;width:5px;height:1px;background:repeating-linear-gradient(to right,#8c8c8c 0,#8c8c8c 1px,transparent 1px,transparent 2px);"></div>
<svg style="left:4px;top:561px;" width="9" height="9" viewBox="0 0 9 9"><rect x=".5" y=".5" width="8" height="8" rx="1" fill="url(#eg)" stroke="#919191"/><path d="M2 4.500h5" stroke="#1c3c8c" stroke-width="1"/><path d="M4.500 2v5" stroke="#1c3c8c" stroke-width="1"/></svg>
<svg style="left:19px;top:557px;" width="16" height="16" viewBox="0 0 16 16"><path d="M1 5.500h14.500v9l-2-1-2 1-2-1-2 1-2-1-2 1-2.500-1z" fill="#f4f4f4" stroke="#808080" stroke-width="1"/><path d="M3 8h4M3 10.500h6M10 9h4" stroke="#b8b8b8" stroke-width="1.100"/><path d="M3 11l1-3.500 8.500-7.500 2.500 2.500-8.500 7.500z" fill="#e89040" stroke="#a85818" stroke-width=".7"/><path d="M3 11l1-3.500 2.500 2.500z" fill="#f8e0b0"/><path d="M11.500 1l2.500 2.500 1-1-2.500-2.500z" fill="#c83030"/></svg>
<span class="t" style="left:39.84px;top:558.75px;font-size:12.5px;color:#000;transform:scaleX(0.8599);transform-origin:0 0;">Leistungsbewertung</span>
<div style="left:14px;top:581px;width:5px;height:1px;background:repeating-linear-gradient(to right,#8c8c8c 0,#8c8c8c 1px,transparent 1px,transparent 2px);"></div>
<svg style="left:4px;top:577px;" width="9" height="9" viewBox="0 0 9 9"><rect x=".5" y=".5" width="8" height="8" rx="1" fill="url(#eg)" stroke="#919191"/><path d="M2 4.500h5" stroke="#1c3c8c" stroke-width="1"/><path d="M4.500 2v5" stroke="#1c3c8c" stroke-width="1"/></svg>
<svg style="left:19px;top:573px;" width="16" height="16" viewBox="0 0 16 16"><rect x="3.500" y="1.500" width="10" height="13" rx="1" fill="#58a858" stroke="#2a702a" stroke-width="1"/><rect x="6.500" y="3.500" width="5" height="3" fill="#98d098"/><path d="M12.500 2.500v11" stroke="#388838" stroke-width="1.400"/><g stroke="#555" stroke-width=".9"><path d="M2 3.500h2.500M2 5.500h2.500M2 7.500h2.500M2 9.500h2.500M2 11.500h2.500M2 13.500h2.500"/></g></svg>
<span class="t" style="left:39.85px;top:574.75px;font-size:12.5px;color:#000;transform:scaleX(0.8501);transform-origin:0 0;">Dokumentenmanagement</span>
<div style="left:14px;top:597px;width:5px;height:1px;background:repeating-linear-gradient(to right,#8c8c8c 0,#8c8c8c 1px,transparent 1px,transparent 2px);"></div>
<svg style="left:4px;top:593px;" width="9" height="9" viewBox="0 0 9 9"><rect x=".5" y=".5" width="8" height="8" rx="1" fill="url(#eg)" stroke="#919191"/><path d="M2 4.500h5" stroke="#1c3c8c" stroke-width="1"/><path d="M4.500 2v5" stroke="#1c3c8c" stroke-width="1"/></svg>
<svg style="left:19px;top:589px;" width="16" height="16" viewBox="0 0 16 16"><path d="M5.500 1.500h8.500v13h-8.500z" fill="#f4c090" stroke="#e0a070" stroke-width=".8"/><path d="M7 3.500h5M7 5.500h5" stroke="#fbe0c0" stroke-width="1"/><circle cx="6" cy="7" r="3.600" fill="#f4f8fa" stroke="#8a8a8a" stroke-width="1.300"/><path d="M3.500 10l-3 4.500" stroke="#c8b060" stroke-width="2.200" stroke-linecap="round"/><path d="M5 12l1.500 3 2-3z" fill="#e8d070"/></svg>
<span class="t" style="left:40.21px;top:590.75px;font-size:12.5px;color:#000;transform:scaleX(0.8691);transform-origin:0 0;">SQL Abfragen</span>
<div style="left:14px;top:613px;width:5px;height:1px;background:repeating-linear-gradient(to right,#8c8c8c 0,#8c8c8c 1px,transparent 1px,transparent 2px);"></div>
<svg style="left:4px;top:609px;" width="9" height="9" viewBox="0 0 9 9"><rect x=".5" y=".5" width="8" height="8" rx="1" fill="url(#eg)" stroke="#919191"/><path d="M2 4.500h5" stroke="#1c3c8c" stroke-width="1"/><path d="M4.500 2v5" stroke="#1c3c8c" stroke-width="1"/></svg>
<svg style="left:19px;top:605px;" width="16" height="16" viewBox="0 0 16 16"><path d="M1.500 5c0-1.200.5-2 1.500-2h3.200l1.400 1.400h6c1 0 1.400.6 1.400 1.400v6.400c0 1-.5 1.500-1.400 1.500h-10.700c-.9 0-1.400-.5-1.400-1.500z" fill="#f6dc78" stroke="#a88420" stroke-width="1"/><path d="M2 7.200c0-.6.300-.9.900-.9h10.700c.6 0 .9.300.9.900v4.900c0 .7-.3 1.100-.9 1.100h-10.700c-.6 0-.9-.4-.9-1.100z" fill="#fdf0a4"/><path d="M2 9.500h12.500v2.600c0 .7-.3 1.100-.9 1.100h-10.700c-.6 0-.9-.4-.9-1.100z" fill="#f7dc6c"/><path d="M2 11.500h12.500v.6c0 .7-.3 1.100-.9 1.100h-10.700c-.6 0-.9-.4-.9-1.100z" fill="#f0c848"/><path d="M2.300 6.100h12" stroke="#c8a03c" stroke-width=".8"/></svg>
<span class="t" style="left:40.16px;top:606.75px;font-size:12.5px;color:#000;transform:scaleX(0.8654);transform-origin:0 0;">Connect</span>
<div style="left:14px;top:629px;width:5px;height:1px;background:repeating-linear-gradient(to right,#8c8c8c 0,#8c8c8c 1px,transparent 1px,transparent 2px);"></div>
<svg style="left:4px;top:625px;" width="9" height="9" viewBox="0 0 9 9"><rect x=".5" y=".5" width="8" height="8" rx="1" fill="url(#eg)" stroke="#919191"/><path d="M2 4.500h5" stroke="#1c3c8c" stroke-width="1"/><path d="M4.500 2v5" stroke="#1c3c8c" stroke-width="1"/></svg>
<svg style="left:19px;top:621px;" width="16" height="16" viewBox="0 0 16 16"><path d="M1.500 1.500h4.500l2 2v11h-6.500z" fill="#f4d470" stroke="#c8a030" stroke-width=".7"/><path d="M8 3.500l3.500-2v9l-3.500 4z" fill="#fae498" stroke="#c8a030" stroke-width=".7"/><circle cx="10.800" cy="8.500" r="4" fill="none" stroke="#1888e0" stroke-width="2.300"/><path d="M7 8.800h8" stroke="#1888e0" stroke-width="1.800"/><path d="M11.500 11.500h4.500v2h-4.500z" fill="#fff"/><path d="M6 5.500c3-3.500 8-4 10-1.500" fill="none" stroke="#58b0f0" stroke-width="1.100"/></svg>
<span class="t" style="left:39.86px;top:622.75px;font-size:12.5px;color:#000;transform:scaleX(0.8388);transform-origin:0 0;">Mitarbeiter-Portal</span>
<div style="left:14px;top:645px;width:5px;height:1px;background:repeating-linear-gradient(to right,#8c8c8c 0,#8c8c8c 1px,transparent 1px,transparent 2px);"></div>
<svg style="left:4px;top:641px;" width="9" height="9" viewBox="0 0 9 9"><rect x=".5" y=".5" width="8" height="8" rx="1" fill="url(#eg)" stroke="#919191"/><path d="M2 4.500h5" stroke="#1c3c8c" stroke-width="1"/><path d="M4.500 2v5" stroke="#1c3c8c" stroke-width="1"/></svg>
<svg style="left:19px;top:637px;" width="16" height="16" viewBox="0 0 16 16"><rect x="2" y=".5" width="11" height="8" fill="#2858d0" stroke="#1838a0" stroke-width=".6"/><path d="M1 10.500l3-2h6l-1 3h-7z" fill="#c8c8d0" stroke="#707080" stroke-width=".6"/><circle cx="10" cy="11" r="4.300" fill="#88b0d8" stroke="#4878a8" stroke-width="1"/><circle cx="10" cy="11" r="4.600" fill="none" stroke="#6090c0" stroke-width="1.500" stroke-dasharray="1.800 1.800"/><circle cx="10" cy="11" r="1.800" fill="#e8f0f8" stroke="#4a6a90" stroke-width=".6"/></svg>
<span class="t" style="left:40.23px;top:638.75px;font-size:12.5px;color:#000;transform:scaleX(0.8302);transform-origin:0 0;">Systemmanagement</span>
<div style="left:209px;top:204px;width:1px;height:637px;background:#828282;"></div>
<div style="left:209px;top:840px;width:1209px;height:1px;background:#6e6e6e;"></div>
<div style="left:210px;top:204px;width:1208px;height:636px;background:#fff;"></div>
<span class="t" style="left:216.97px;top:210.75px;font-size:12.5px;color:#000;transform:scaleX(0.8272);transform-origin:0 0;">Bestand</span>
<span class="t" style="right:1075.15px;top:210.75px;font-size:12.5px;color:#000;transform:scaleX(0.8404);transform-origin:100% 0;">Teilnehmer-Nr</span>
<span class="t" style="right:995.16px;top:210.75px;font-size:12.5px;color:#000;transform:scaleX(0.8324);transform-origin:100% 0;">Arbeitgeber-Nr</span>
<span class="t" style="right:920.86px;top:210.75px;font-size:12.5px;color:#000;transform:scaleX(0.8353);transform-origin:100% 0;">Pers...</span>
<span class="t" style="left:515.13px;top:210.75px;font-size:12.5px;color:#000;transform:scaleX(0.8738);transform-origin:0 0;">Nachname</span>
<span class="t" style="left:667.00px;top:210.75px;font-size:12.5px;color:#000;transform:scaleX(0.8687);transform-origin:0 0;">Vorname</span>
<span class="t" style="left:725.51px;top:210.75px;font-size:12.5px;color:#000;transform:scaleX(0.8645);transform-origin:0 0;">Straße</span>
<span class="t" style="left:931.50px;top:210.75px;font-size:12.5px;color:#000;transform:scaleX(0.9043);transform-origin:0 0;">PLZ</span>
<span class="t" style="left:1082.51px;top:210.75px;font-size:12.5px;color:#000;transform:scaleX(0.8657);transform-origin:0 0;">Ort</span>
<span class="t" style="left:1111.47px;top:210.75px;font-size:12.5px;color:#000;transform:scaleX(0.8546);transform-origin:0 0;">Geburtsdatum</span>
<span class="t" style="left:1196.13px;top:210.75px;font-size:12.5px;color:#000;transform:scaleX(0.8727);transform-origin:0 0;">Eintritt</span>
<span class="t" style="left:1294.80px;top:210.75px;font-size:12.5px;color:#000;transform:scaleX(0.8360);transform-origin:0 0;">Austritt</span>
<span class="t" style="left:1342.18px;top:210.75px;font-size:12.5px;color:#000;transform:scaleX(0.8493);transform-origin:0 0;">Zust. Benut:</span>
<div style="left:269px;top:205px;width:1px;height:24px;background:#e5e5e5;"></div>
<div style="left:355px;top:205px;width:1px;height:24px;background:#e5e5e5;"></div>
<div style="left:435px;top:205px;width:1px;height:24px;background:#e5e5e5;"></div>
<div style="left:509px;top:205px;width:1px;height:24px;background:#e5e5e5;"></div>
<div style="left:660px;top:205px;width:1px;height:24px;background:#e5e5e5;"></div>
<div style="left:719px;top:205px;width:1px;height:24px;background:#e5e5e5;"></div>
<div style="left:925px;top:205px;width:1px;height:24px;background:#e5e5e5;"></div>
<div style="left:1076px;top:205px;width:1px;height:24px;background:#e5e5e5;"></div>
<div style="left:1105px;top:205px;width:1px;height:24px;background:#e5e5e5;"></div>
<div style="left:1189px;top:205px;width:1px;height:24px;background:#e5e5e5;"></div>
<div style="left:1288px;top:205px;width:1px;height:24px;background:#e5e5e5;"></div>
<div style="left:1336px;top:205px;width:1px;height:24px;background:#e5e5e5;"></div>
<svg style="left:442px;top:212px;" width="17" height="10" viewBox="0 0 17 10"><path d="M1 9.500L8.500 1L16 9.500z" fill="#a0a0a0"/></svg>
<div style="left:231px;top:229px;width:1169px;height:16px;background:#0078d7;"></div>
<div style="left:231px;top:245px;width:1169px;height:1px;background:#a8f0ff;"></div>
<div style="left:210px;top:245px;width:21px;height:1px;background:#e6e6e6;"></div>
<svg style="left:219px;top:231px;" width="8" height="12" viewBox="0 0 8 12"><path d="M.6 11.300c-.4-3.300 1.200-5 3.400-5s3.800 1.700 3.400 5c-1.300 1-5.500 1-6.800 0z" fill="#4aa2ac" stroke="#2a6c7c" stroke-width=".7"/><path d="M2.700 6.800l1.300 1.800 1.300-1.800z" fill="#a0dce0"/><circle cx="4" cy="3.400" r="2.900" fill="#3c7cc4" stroke="#1a4888" stroke-width=".7"/><circle cx="4.600" cy="2.700" r="1.100" fill="#80b4e8"/></svg>
<span class="t" style="left:233.24px;top:231.75px;font-size:12.5px;color:#e4ffff;transform:scaleX(0.8263);transform-origin:0 0;">Original</span>
<span class="t" style="right:1074.62px;top:231.75px;font-size:12.5px;color:#e4ffff;transform:scaleX(0.8802);transform-origin:100% 0;">9870</span>
<span class="t" style="right:994.50px;top:231.75px;font-size:12.5px;color:#e4ffff;transform:scaleX(0.8600);transform-origin:100% 0;">2</span>
<span class="t" style="right:920.29px;top:231.75px;font-size:12.5px;color:#e4ffff;transform:scaleX(0.8781);transform-origin:100% 0;">100100</span>
<span class="t" style="left:515.87px;top:231.75px;font-size:12.5px;color:#e4ffff;transform:scaleX(0.8421);transform-origin:0 0;">Costa</span>
<span class="t" style="left:666.60px;top:231.75px;font-size:12.5px;color:#e4ffff;transform:scaleX(0.8983);transform-origin:0 0;">Kevin</span>
<span class="t" style="left:725.42px;top:231.75px;font-size:12.5px;color:#e4ffff;transform:scaleX(0.8828);transform-origin:0 0;">Hauptstr. 22</span>
<span class="t" style="left:931.86px;top:231.75px;font-size:12.5px;color:#e4ffff;transform:scaleX(0.8757);transform-origin:0 0;">80337</span>
<span class="t" style="left:1082.12px;top:231.75px;font-size:12.5px;color:#e4ffff;transform:scaleX(0.8800);transform-origin:0 0;">M...</span>
<span class="t" style="left:1111.62px;top:231.75px;font-size:12.5px;color:#e4ffff;transform:scaleX(0.8763);transform-origin:0 0;">31.03.1965</span>
<span class="t" style="left:1196.62px;top:231.75px;font-size:12.5px;color:#e4ffff;transform:scaleX(0.8754);transform-origin:0 0;">01.09.2000</span>
<span class="t" style="left:1342.84px;top:231.75px;font-size:12.5px;color:#e4ffff;transform:scaleX(0.8605);transform-origin:0 0;">PRESALES</span>
<div style="left:231px;top:246px;width:1169px;height:16px;background:#0078d7;"></div>
<div style="left:231px;top:262px;width:1169px;height:1px;background:#a8f0ff;"></div>
<div style="left:210px;top:262px;width:21px;height:1px;background:#e6e6e6;"></div>
<svg style="left:219px;top:248px;" width="8" height="12" viewBox="0 0 8 12"><path d="M.6 11.300c-.4-3.300 1.200-5 3.400-5s3.800 1.700 3.400 5c-1.300 1-5.500 1-6.800 0z" fill="#4aa2ac" stroke="#2a6c7c" stroke-width=".7"/><path d="M2.700 6.800l1.300 1.800 1.300-1.800z" fill="#a0dce0"/><circle cx="4" cy="3.400" r="2.900" fill="#3c7cc4" stroke="#1a4888" stroke-width=".7"/><circle cx="4.600" cy="2.700" r="1.100" fill="#80b4e8"/></svg>
<span class="t" style="left:233.24px;top:248.75px;font-size:12.5px;color:#e4ffff;transform:scaleX(0.8263);transform-origin:0 0;">Original</span>
<span class="t" style="right:1074.62px;top:248.75px;font-size:12.5px;color:#e4ffff;transform:scaleX(0.8802);transform-origin:100% 0;">9870</span>
<span class="t" style="right:994.61px;top:248.75px;font-size:12.5px;color:#e4ffff;transform:scaleX(0.8600);transform-origin:100% 0;">0</span>
<span class="t" style="right:920.18px;top:248.75px;font-size:12.5px;color:#e4ffff;transform:scaleX(0.8809);transform-origin:100% 0;">100201</span>
<span class="t" style="left:515.50px;top:248.75px;font-size:12.5px;color:#e4ffff;transform:scaleX(0.9004);transform-origin:0 0;">Nabel</span>
<span class="t" style="left:666.98px;top:248.75px;font-size:12.5px;color:#e4ffff;transform:scaleX(0.8337);transform-origin:0 0;">Carmen</span>
<span class="t" style="left:726.30px;top:248.75px;font-size:12.5px;color:#e4ffff;transform:scaleX(0.8484);transform-origin:0 0;">Ausbildungsweg 6a</span>
<span class="t" style="left:932.08px;top:248.75px;font-size:12.5px;color:#e4ffff;transform:scaleX(0.8676);transform-origin:0 0;">46045</span>
<span class="t" style="left:1082.50px;top:248.75px;font-size:12.5px;color:#e4ffff;transform:scaleX(0.8919);transform-origin:0 0;">O...</span>
<span class="t" style="left:1111.62px;top:248.75px;font-size:12.5px;color:#e4ffff;transform:scaleX(0.8772);transform-origin:0 0;">02.01.1979</span>
<span class="t" style="left:1196.62px;top:248.75px;font-size:12.5px;color:#e4ffff;transform:scaleX(0.8736);transform-origin:0 0;">01.10.2004</span>
<span class="t" style="left:1342.82px;top:248.75px;font-size:12.5px;color:#e4ffff;transform:scaleX(0.8838);transform-origin:0 0;">DOZENT</span>
<div style="left:231px;top:263px;width:1169px;height:16px;background:#0078d7;"></div>
<div style="left:231px;top:279px;width:1169px;height:1px;background:#a8f0ff;"></div>
<div style="left:210px;top:279px;width:21px;height:1px;background:#e6e6e6;"></div>
<svg style="left:219px;top:265px;" width="8" height="12" viewBox="0 0 8 12"><path d="M.6 11.300c-.4-3.300 1.200-5 3.400-5s3.800 1.700 3.400 5c-1.300 1-5.500 1-6.800 0z" fill="#4aa2ac" stroke="#2a6c7c" stroke-width=".7"/><path d="M2.700 6.800l1.300 1.800 1.300-1.800z" fill="#a0dce0"/><circle cx="4" cy="3.400" r="2.900" fill="#3c7cc4" stroke="#1a4888" stroke-width=".7"/><circle cx="4.600" cy="2.700" r="1.100" fill="#80b4e8"/></svg>
<span class="t" style="left:233.24px;top:265.75px;font-size:12.5px;color:#e4ffff;transform:scaleX(0.8263);transform-origin:0 0;">Original</span>
<span class="t" style="right:1074.62px;top:265.75px;font-size:12.5px;color:#e4ffff;transform:scaleX(0.8802);transform-origin:100% 0;">9870</span>
<span class="t" style="right:994.61px;top:265.75px;font-size:12.5px;color:#e4ffff;transform:scaleX(0.8600);transform-origin:100% 0;">0</span>
<span class="t" style="right:920.29px;top:265.75px;font-size:12.5px;color:#e4ffff;transform:scaleX(0.8781);transform-origin:100% 0;">100400</span>
<span class="t" style="left:515.91px;top:265.75px;font-size:12.5px;color:#e4ffff;transform:scaleX(0.8625);transform-origin:0 0;">Spangenmann</span>
<span class="t" style="left:666.97px;top:265.75px;font-size:12.5px;color:#e4ffff;transform:scaleX(0.8472);transform-origin:0 0;">Carsten</span>
<span class="t" style="left:725.44px;top:265.75px;font-size:12.5px;color:#e4ffff;transform:scaleX(0.8568);transform-origin:0 0;">Kinderpflegerweg 2 c</span>
<span class="t" style="left:931.81px;top:265.75px;font-size:12.5px;color:#e4ffff;transform:scaleX(0.8757);transform-origin:0 0;">97816</span>
<span class="t" style="left:1081.92px;top:265.75px;font-size:12.5px;color:#e4ffff;transform:scaleX(1.0820);transform-origin:0 0;">L...</span>
<span class="t" style="left:1111.17px;top:265.75px;font-size:12.5px;color:#e4ffff;transform:scaleX(0.8834);transform-origin:0 0;">19.12.1978</span>
<span class="t" style="left:1196.62px;top:265.75px;font-size:12.5px;color:#e4ffff;transform:scaleX(0.8772);transform-origin:0 0;">01.12.1999</span>
<span class="t" style="left:1343.21px;top:265.75px;font-size:12.5px;color:#e4ffff;transform:scaleX(0.8799);transform-origin:0 0;">SCHWAB</span>
<div style="left:231px;top:280px;width:1169px;height:16px;background:#0078d7;"></div>
<div style="left:231px;top:296px;width:1169px;height:1px;background:#a8f0ff;"></div>
<div style="left:210px;top:296px;width:21px;height:1px;background:#e6e6e6;"></div>
<svg style="left:219px;top:282px;" width="8" height="12" viewBox="0 0 8 12"><path d="M.6 11.300c-.4-3.300 1.200-5 3.400-5s3.800 1.700 3.400 5c-1.300 1-5.500 1-6.800 0z" fill="#4aa2ac" stroke="#2a6c7c" stroke-width=".7"/><path d="M2.700 6.800l1.300 1.800 1.300-1.800z" fill="#a0dce0"/><circle cx="4" cy="3.400" r="2.900" fill="#3c7cc4" stroke="#1a4888" stroke-width=".7"/><circle cx="4.600" cy="2.700" r="1.100" fill="#80b4e8"/></svg>
<span class="t" style="left:233.24px;top:282.75px;font-size:12.5px;color:#e4ffff;transform:scaleX(0.8263);transform-origin:0 0;">Original</span>
<span class="t" style="right:1074.62px;top:282.75px;font-size:12.5px;color:#e4ffff;transform:scaleX(0.8802);transform-origin:100% 0;">9870</span>
<span class="t" style="right:994.61px;top:282.75px;font-size:12.5px;color:#e4ffff;transform:scaleX(0.8600);transform-origin:100% 0;">0</span>
<span class="t" style="right:920.29px;top:282.75px;font-size:12.5px;color:#e4ffff;transform:scaleX(0.8781);transform-origin:100% 0;">100410</span>
<span class="t" style="left:515.93px;top:282.75px;font-size:12.5px;color:#e4ffff;transform:scaleX(0.8367);transform-origin:0 0;">Sponheimer</span>
<span class="t" style="left:666.65px;top:282.75px;font-size:12.5px;color:#e4ffff;transform:scaleX(0.8549);transform-origin:0 0;">Margit</span>
<span class="t" style="left:725.45px;top:282.75px;font-size:12.5px;color:#e4ffff;transform:scaleX(0.8536);transform-origin:0 0;">Frauenfeldstr. 66</span>
<span class="t" style="left:931.81px;top:282.75px;font-size:12.5px;color:#e4ffff;transform:scaleX(0.8757);transform-origin:0 0;">97753</span>
<span class="t" style="left:1082.01px;top:282.75px;font-size:12.5px;color:#e4ffff;transform:scaleX(0.9888);transform-origin:0 0;">K...</span>
<span class="t" style="left:1111.16px;top:282.75px;font-size:12.5px;color:#e4ffff;transform:scaleX(0.8972);transform-origin:0 0;">18.11.1953</span>
<span class="t" style="left:1196.62px;top:282.75px;font-size:12.5px;color:#e4ffff;transform:scaleX(0.8763);transform-origin:0 0;">01.09.2005</span>
<span class="t" style="left:1343.21px;top:282.75px;font-size:12.5px;color:#e4ffff;transform:scaleX(0.8799);transform-origin:0 0;">SCHWAB</span>
<div style="left:231px;top:297px;width:1169px;height:16px;background:#0078d7;"></div>
<div style="left:231px;top:313px;width:1169px;height:1px;background:#a8f0ff;"></div>
<div style="left:210px;top:313px;width:21px;height:1px;background:#e6e6e6;"></div>
<svg style="left:219px;top:299px;" width="8" height="12" viewBox="0 0 8 12"><path d="M.6 11.300c-.4-3.300 1.200-5 3.400-5s3.800 1.700 3.400 5c-1.300 1-5.500 1-6.800 0z" fill="#4aa2ac" stroke="#2a6c7c" stroke-width=".7"/><path d="M2.700 6.800l1.300 1.800 1.300-1.800z" fill="#a0dce0"/><circle cx="4" cy="3.400" r="2.900" fill="#3c7cc4" stroke="#1a4888" stroke-width=".7"/><circle cx="4.600" cy="2.700" r="1.100" fill="#80b4e8"/></svg>
<span class="t" style="left:233.24px;top:299.75px;font-size:12.5px;color:#e4ffff;transform:scaleX(0.8263);transform-origin:0 0;">Original</span>
<span class="t" style="right:1074.62px;top:299.75px;font-size:12.5px;color:#e4ffff;transform:scaleX(0.8802);transform-origin:100% 0;">9870</span>
<span class="t" style="right:994.50px;top:299.75px;font-size:12.5px;color:#e4ffff;transform:scaleX(0.8600);transform-origin:100% 0;">2</span>
<span class="t" style="right:920.29px;top:299.75px;font-size:12.5px;color:#e4ffff;transform:scaleX(0.8781);transform-origin:100% 0;">100500</span>
<span class="t" style="left:515.52px;top:299.75px;font-size:12.5px;color:#e4ffff;transform:scaleX(0.8772);transform-origin:0 0;">Neumann</span>
<span class="t" style="left:667.03px;top:299.75px;font-size:12.5px;color:#e4ffff;transform:scaleX(0.8297);transform-origin:0 0;">Oliver</span>
<span class="t" style="left:725.46px;top:299.75px;font-size:12.5px;color:#e4ffff;transform:scaleX(0.8448);transform-origin:0 0;">Hausmeistergasse 12</span>
<span class="t" style="left:931.75px;top:299.75px;font-size:12.5px;color:#e4ffff;transform:scaleX(0.8757);transform-origin:0 0;">60320</span>
<span class="t" style="left:1083.00px;top:299.75px;font-size:12.5px;color:#e4ffff;transform:scaleX(0.9151);transform-origin:0 0;">W..</span>
<span class="t" style="left:1111.62px;top:299.75px;font-size:12.5px;color:#e4ffff;transform:scaleX(0.8763);transform-origin:0 0;">01.06.1963</span>
<span class="t" style="left:1196.62px;top:299.75px;font-size:12.5px;color:#e4ffff;transform:scaleX(0.8763);transform-origin:0 0;">01.10.1996</span>
<span class="t" style="left:1343.21px;top:299.75px;font-size:12.5px;color:#e4ffff;transform:scaleX(0.8799);transform-origin:0 0;">SCHWAB</span>
<div style="left:231px;top:314px;width:1169px;height:16px;background:#0078d7;"></div>
<div style="left:231px;top:330px;width:1169px;height:1px;background:#a8f0ff;"></div>
<div style="left:210px;top:330px;width:21px;height:1px;background:#e6e6e6;"></div>
<svg style="left:219px;top:316px;" width="8" height="12" viewBox="0 0 8 12"><path d="M.6 11.300c-.4-3.300 1.200-5 3.400-5s3.800 1.700 3.400 5c-1.300 1-5.500 1-6.800 0z" fill="#4aa2ac" stroke="#2a6c7c" stroke-width=".7"/><path d="M2.700 6.800l1.300 1.800 1.300-1.800z" fill="#a0dce0"/><circle cx="4" cy="3.400" r="2.900" fill="#3c7cc4" stroke="#1a4888" stroke-width=".7"/><circle cx="4.600" cy="2.700" r="1.100" fill="#80b4e8"/></svg>
<span class="t" style="left:233.24px;top:316.75px;font-size:12.5px;color:#e4ffff;transform:scaleX(0.8263);transform-origin:0 0;">Original</span>
<span class="t" style="right:1074.62px;top:316.75px;font-size:12.5px;color:#e4ffff;transform:scaleX(0.8802);transform-origin:100% 0;">9870</span>
<span class="t" style="right:994.56px;top:316.75px;font-size:12.5px;color:#e4ffff;transform:scaleX(0.8600);transform-origin:100% 0;">3</span>
<span class="t" style="right:920.29px;top:316.75px;font-size:12.5px;color:#e4ffff;transform:scaleX(0.8781);transform-origin:100% 0;">100900</span>
<span class="t" style="left:515.55px;top:316.75px;font-size:12.5px;color:#e4ffff;transform:scaleX(0.8527);transform-origin:0 0;">Mittermann</span>
<span class="t" style="left:666.60px;top:316.75px;font-size:12.5px;color:#e4ffff;transform:scaleX(0.8980);transform-origin:0 0;">Michael</span>
<span class="t" style="left:726.30px;top:316.75px;font-size:12.5px;color:#e4ffff;transform:scaleX(0.8514);transform-origin:0 0;">Ausbildungsweg 135</span>
<span class="t" style="left:931.81px;top:316.75px;font-size:12.5px;color:#e4ffff;transform:scaleX(0.8708);transform-origin:0 0;">97204</span>
<span class="t" style="left:1082.05px;top:316.75px;font-size:12.5px;color:#e4ffff;transform:scaleX(0.9496);transform-origin:0 0;">H...</span>
<span class="t" style="left:1111.17px;top:316.75px;font-size:12.5px;color:#e4ffff;transform:scaleX(0.8834);transform-origin:0 0;">10.03.1978</span>
<span class="t" style="left:1196.62px;top:316.75px;font-size:12.5px;color:#e4ffff;transform:scaleX(0.8763);transform-origin:0 0;">01.03.2005</span>
<span class="t" style="left:1343.21px;top:316.75px;font-size:12.5px;color:#e4ffff;transform:scaleX(0.8799);transform-origin:0 0;">SCHWAB</span>
<div style="left:231px;top:331px;width:1169px;height:16px;background:#0078d7;"></div>
<div style="left:231px;top:347px;width:1169px;height:1px;background:#a8f0ff;"></div>
<div style="left:210px;top:347px;width:21px;height:1px;background:#e6e6e6;"></div>
<svg style="left:219px;top:333px;" width="8" height="12" viewBox="0 0 8 12"><path d="M.6 11.300c-.4-3.300 1.200-5 3.400-5s3.800 1.700 3.400 5c-1.300 1-5.500 1-6.800 0z" fill="#4aa2ac" stroke="#2a6c7c" stroke-width=".7"/><path d="M2.700 6.800l1.300 1.800 1.300-1.800z" fill="#a0dce0"/><circle cx="4" cy="3.400" r="2.900" fill="#3c7cc4" stroke="#1a4888" stroke-width=".7"/><circle cx="4.600" cy="2.700" r="1.100" fill="#80b4e8"/></svg>
<span class="t" style="left:233.24px;top:333.75px;font-size:12.5px;color:#e4ffff;transform:scaleX(0.8263);transform-origin:0 0;">Original</span>
<span class="t" style="right:1074.62px;top:333.75px;font-size:12.5px;color:#e4ffff;transform:scaleX(0.8802);transform-origin:100% 0;">9870</span>
<span class="t" style="right:995.50px;top:333.75px;font-size:12.5px;color:#e4ffff;transform:scaleX(0.8600);transform-origin:100% 0;">1</span>
<span class="t" style="right:920.28px;top:333.75px;font-size:12.5px;color:#e4ffff;transform:scaleX(0.8990);transform-origin:100% 0;">110200</span>
<span class="t" style="left:516.18px;top:333.75px;font-size:12.5px;color:#e4ffff;transform:scaleX(0.8843);transform-origin:0 0;">Turbo</span>
<span class="t" style="left:666.62px;top:333.75px;font-size:12.5px;color:#e4ffff;transform:scaleX(0.8759);transform-origin:0 0;">Eveline</span>
<span class="t" style="left:725.77px;top:333.75px;font-size:12.5px;color:#e4ffff;transform:scaleX(0.8499);transform-origin:0 0;">Gleitzone 8</span>
<span class="t" style="left:931.75px;top:333.75px;font-size:12.5px;color:#e4ffff;transform:scaleX(0.8790);transform-origin:0 0;">69469</span>
<span class="t" style="left:1083.00px;top:333.75px;font-size:12.5px;color:#e4ffff;transform:scaleX(0.9151);transform-origin:0 0;">W..</span>
<span class="t" style="left:1111.45px;top:333.75px;font-size:12.5px;color:#e4ffff;transform:scaleX(0.8798);transform-origin:0 0;">27.12.1952</span>
<span class="t" style="left:1196.17px;top:333.75px;font-size:12.5px;color:#e4ffff;transform:scaleX(0.8843);transform-origin:0 0;">15.01.2009</span>
<span class="t" style="left:1342.80px;top:333.75px;font-size:12.5px;color:#e4ffff;transform:scaleX(0.8961);transform-origin:0 0;">PLATZ-11</span>
<div style="left:231px;top:348px;width:1169px;height:16px;background:#0078d7;"></div>
<div style="left:231px;top:364px;width:1169px;height:1px;background:#a8f0ff;"></div>
<div style="left:210px;top:364px;width:21px;height:1px;background:#e6e6e6;"></div>
<svg style="left:219px;top:350px;" width="8" height="12" viewBox="0 0 8 12"><path d="M.6 11.300c-.4-3.300 1.200-5 3.400-5s3.800 1.700 3.400 5c-1.300 1-5.500 1-6.800 0z" fill="#4aa2ac" stroke="#2a6c7c" stroke-width=".7"/><path d="M2.700 6.800l1.300 1.800 1.300-1.800z" fill="#a0dce0"/><circle cx="4" cy="3.400" r="2.900" fill="#3c7cc4" stroke="#1a4888" stroke-width=".7"/><circle cx="4.600" cy="2.700" r="1.100" fill="#80b4e8"/></svg>
<span class="t" style="left:233.24px;top:350.75px;font-size:12.5px;color:#e4ffff;transform:scaleX(0.8263);transform-origin:0 0;">Original</span>
<span class="t" style="right:1074.62px;top:350.75px;font-size:12.5px;color:#e4ffff;transform:scaleX(0.8802);transform-origin:100% 0;">9870</span>
<span class="t" style="right:994.50px;top:350.75px;font-size:12.5px;color:#e4ffff;transform:scaleX(0.8600);transform-origin:100% 0;">2</span>
<span class="t" style="right:920.29px;top:350.75px;font-size:12.5px;color:#e4ffff;transform:scaleX(0.8781);transform-origin:100% 0;">120100</span>
<span class="t" style="left:931.92px;top:350.75px;font-size:12.5px;color:#e4ffff;transform:scaleX(0.8676);transform-origin:0 0;">08064</span>
<span class="t" style="left:1082.63px;top:350.75px;font-size:12.5px;color:#e4ffff;transform:scaleX(0.9962);transform-origin:0 0;">Z...</span>
<span class="t" style="left:1111.62px;top:350.75px;font-size:12.5px;color:#e4ffff;transform:scaleX(0.8763);transform-origin:0 0;">07.05.1975</span>
<span class="t" style="left:1196.62px;top:350.75px;font-size:12.5px;color:#e4ffff;transform:scaleX(0.8772);transform-origin:0 0;">01.01.2009</span>
<span class="t" style="left:1342.79px;top:350.75px;font-size:12.5px;color:#e4ffff;transform:scaleX(0.9056);transform-origin:0 0;">PLATZ-12</span>
<div style="left:231px;top:365px;width:1169px;height:16px;background:#0078d7;"></div>
<div style="left:231px;top:381px;width:1169px;height:1px;background:#a8f0ff;"></div>
<div style="left:210px;top:381px;width:21px;height:1px;background:#e6e6e6;"></div>
<svg style="left:219px;top:367px;" width="8" height="12" viewBox="0 0 8 12"><path d="M.6 11.300c-.4-3.300 1.200-5 3.400-5s3.800 1.700 3.400 5c-1.300 1-5.500 1-6.800 0z" fill="#4aa2ac" stroke="#2a6c7c" stroke-width=".7"/><path d="M2.700 6.800l1.300 1.800 1.300-1.800z" fill="#a0dce0"/><circle cx="4" cy="3.400" r="2.900" fill="#3c7cc4" stroke="#1a4888" stroke-width=".7"/><circle cx="4.600" cy="2.700" r="1.100" fill="#80b4e8"/></svg>
<span class="t" style="left:233.24px;top:367.75px;font-size:12.5px;color:#e4ffff;transform:scaleX(0.8263);transform-origin:0 0;">Original</span>
<span class="t" style="right:1074.62px;top:367.75px;font-size:12.5px;color:#e4ffff;transform:scaleX(0.8802);transform-origin:100% 0;">9870</span>
<span class="t" style="right:995.50px;top:367.75px;font-size:12.5px;color:#e4ffff;transform:scaleX(0.8600);transform-origin:100% 0;">1</span>
<span class="t" style="right:920.29px;top:367.75px;font-size:12.5px;color:#e4ffff;transform:scaleX(0.8781);transform-origin:100% 0;">120200</span>
<span class="t" style="left:932.08px;top:367.75px;font-size:12.5px;color:#e4ffff;transform:scaleX(0.8661);transform-origin:0 0;">41460</span>
<span class="t" style="left:1082.05px;top:367.75px;font-size:12.5px;color:#e4ffff;transform:scaleX(0.9496);transform-origin:0 0;">N...</span>
<span class="t" style="left:1111.17px;top:367.75px;font-size:12.5px;color:#e4ffff;transform:scaleX(0.8843);transform-origin:0 0;">16.06.1972</span>
<span class="t" style="left:1196.62px;top:367.75px;font-size:12.5px;color:#e4ffff;transform:scaleX(0.8772);transform-origin:0 0;">01.01.2009</span>
<span class="t" style="left:1342.79px;top:367.75px;font-size:12.5px;color:#e4ffff;transform:scaleX(0.9056);transform-origin:0 0;">PLATZ-12</span>
<div style="left:231px;top:382px;width:1169px;height:16px;background:#0078d7;"></div>
<div style="left:231px;top:398px;width:1169px;height:1px;background:#a8f0ff;"></div>
<div style="left:210px;top:398px;width:21px;height:1px;background:#e6e6e6;"></div>
<svg style="left:219px;top:384px;" width="8" height="12" viewBox="0 0 8 12"><path d="M.6 11.300c-.4-3.300 1.200-5 3.400-5s3.800 1.700 3.400 5c-1.300 1-5.500 1-6.800 0z" fill="#4aa2ac" stroke="#2a6c7c" stroke-width=".7"/><path d="M2.700 6.800l1.300 1.800 1.300-1.800z" fill="#a0dce0"/><circle cx="4" cy="3.400" r="2.900" fill="#3c7cc4" stroke="#1a4888" stroke-width=".7"/><circle cx="4.600" cy="2.700" r="1.100" fill="#80b4e8"/></svg>
<span class="t" style="left:233.24px;top:384.75px;font-size:12.5px;color:#e4ffff;transform:scaleX(0.8263);transform-origin:0 0;">Original</span>
<span class="t" style="right:1074.62px;top:384.75px;font-size:12.5px;color:#e4ffff;transform:scaleX(0.8802);transform-origin:100% 0;">9870</span>
<span class="t" style="right:994.61px;top:384.75px;font-size:12.5px;color:#e4ffff;transform:scaleX(0.8600);transform-origin:100% 0;">0</span>
<span class="t" style="right:920.28px;top:384.75px;font-size:12.5px;color:#e4ffff;transform:scaleX(0.8920);transform-origin:100% 0;">200110</span>
<span class="t" style="left:931.75px;top:384.75px;font-size:12.5px;color:#e4ffff;transform:scaleX(0.8790);transform-origin:0 0;">65239</span>
<span class="t" style="left:1082.05px;top:384.75px;font-size:12.5px;color:#e4ffff;transform:scaleX(0.9496);transform-origin:0 0;">H...</span>
<span class="t" style="left:1111.17px;top:384.75px;font-size:12.5px;color:#e4ffff;transform:scaleX(0.8834);transform-origin:0 0;">13.06.1963</span>
<span class="t" style="left:1196.62px;top:384.75px;font-size:12.5px;color:#e4ffff;transform:scaleX(0.8763);transform-origin:0 0;">01.07.2005</span>
<span class="t" style="left:1343.21px;top:384.75px;font-size:12.5px;color:#e4ffff;transform:scaleX(0.8799);transform-origin:0 0;">SCHWAB</span>
<div style="left:231px;top:399px;width:1169px;height:16px;background:#0078d7;"></div>
<div style="left:231px;top:415px;width:1169px;height:1px;background:#a8f0ff;"></div>
<div style="left:210px;top:415px;width:21px;height:1px;background:#e6e6e6;"></div>
<svg style="left:219px;top:401px;" width="8" height="12" viewBox="0 0 8 12"><path d="M.6 11.300c-.4-3.300 1.200-5 3.400-5s3.800 1.700 3.400 5c-1.300 1-5.500 1-6.800 0z" fill="#4aa2ac" stroke="#2a6c7c" stroke-width=".7"/><path d="M2.700 6.800l1.300 1.800 1.300-1.800z" fill="#a0dce0"/><circle cx="4" cy="3.400" r="2.900" fill="#3c7cc4" stroke="#1a4888" stroke-width=".7"/><circle cx="4.600" cy="2.700" r="1.100" fill="#80b4e8"/></svg>
<span class="t" style="left:233.24px;top:401.75px;font-size:12.5px;color:#e4ffff;transform:scaleX(0.8263);transform-origin:0 0;">Original</span>
<span class="t" style="right:1074.62px;top:401.75px;font-size:12.5px;color:#e4ffff;transform:scaleX(0.8802);transform-origin:100% 0;">9870</span>
<span class="t" style="right:994.61px;top:401.75px;font-size:12.5px;color:#e4ffff;transform:scaleX(0.8600);transform-origin:100% 0;">0</span>
<span class="t" style="right:920.30px;top:401.75px;font-size:12.5px;color:#e4ffff;transform:scaleX(0.8714);transform-origin:100% 0;">200200</span>
<span class="t" style="left:931.81px;top:401.75px;font-size:12.5px;color:#e4ffff;transform:scaleX(0.8757);transform-origin:0 0;">97753</span>
<span class="t" style="left:1082.01px;top:401.75px;font-size:12.5px;color:#e4ffff;transform:scaleX(0.9888);transform-origin:0 0;">K...</span>
<span class="t" style="left:1111.16px;top:401.75px;font-size:12.5px;color:#e4ffff;transform:scaleX(0.8981);transform-origin:0 0;">17.11.1972</span>
<span class="t" style="left:1196.61px;top:401.75px;font-size:12.5px;color:#e4ffff;transform:scaleX(0.8898);transform-origin:0 0;">01.11.2003</span>
<span class="t" style="left:1342.79px;top:401.75px;font-size:12.5px;color:#e4ffff;transform:scaleX(0.9074);transform-origin:0 0;">PLATZ-2</span>
<div style="left:231px;top:416px;width:1169px;height:16px;background:#0078d7;"></div>
<div style="left:231px;top:432px;width:1169px;height:1px;background:#a8f0ff;"></div>
<div style="left:210px;top:432px;width:21px;height:1px;background:#e6e6e6;"></div>
<svg style="left:219px;top:418px;" width="8" height="12" viewBox="0 0 8 12"><path d="M.6 11.300c-.4-3.300 1.200-5 3.400-5s3.800 1.700 3.400 5c-1.300 1-5.500 1-6.800 0z" fill="#4aa2ac" stroke="#2a6c7c" stroke-width=".7"/><path d="M2.700 6.800l1.300 1.800 1.300-1.800z" fill="#a0dce0"/><circle cx="4" cy="3.400" r="2.900" fill="#3c7cc4" stroke="#1a4888" stroke-width=".7"/><circle cx="4.600" cy="2.700" r="1.100" fill="#80b4e8"/></svg>
<span class="t" style="left:233.24px;top:418.75px;font-size:12.5px;color:#e4ffff;transform:scaleX(0.8263);transform-origin:0 0;">Original</span>
<span class="t" style="right:1074.62px;top:418.75px;font-size:12.5px;color:#e4ffff;transform:scaleX(0.8802);transform-origin:100% 0;">9870</span>
<span class="t" style="right:995.50px;top:418.75px;font-size:12.5px;color:#e4ffff;transform:scaleX(0.8600);transform-origin:100% 0;">1</span>
<span class="t" style="right:920.30px;top:418.75px;font-size:12.5px;color:#e4ffff;transform:scaleX(0.8714);transform-origin:100% 0;">200300</span>
<span class="t" style="left:931.92px;top:418.75px;font-size:12.5px;color:#e4ffff;transform:scaleX(0.8725);transform-origin:0 0;">35285</span>
<span class="t" style="left:1082.44px;top:418.75px;font-size:12.5px;color:#e4ffff;transform:scaleX(0.8949);transform-origin:0 0;">G...</span>
<span class="t" style="left:1111.17px;top:418.75px;font-size:12.5px;color:#e4ffff;transform:scaleX(0.8843);transform-origin:0 0;">14.07.1952</span>
<span class="t" style="left:1196.62px;top:418.75px;font-size:12.5px;color:#e4ffff;transform:scaleX(0.8772);transform-origin:0 0;">01.04.2001</span>
<span class="t" style="left:1343.21px;top:418.75px;font-size:12.5px;color:#e4ffff;transform:scaleX(0.8799);transform-origin:0 0;">SCHWAB</span>
<div style="left:231px;top:433px;width:1169px;height:16px;background:#0078d7;"></div>
<div style="left:231px;top:449px;width:1169px;height:1px;background:#a8f0ff;"></div>
<div style="left:210px;top:449px;width:21px;height:1px;background:#e6e6e6;"></div>
<svg style="left:219px;top:435px;" width="8" height="12" viewBox="0 0 8 12"><path d="M.6 11.300c-.4-3.300 1.200-5 3.400-5s3.800 1.700 3.400 5c-1.300 1-5.500 1-6.800 0z" fill="#4aa2ac" stroke="#2a6c7c" stroke-width=".7"/><path d="M2.700 6.800l1.300 1.800 1.300-1.800z" fill="#a0dce0"/><circle cx="4" cy="3.400" r="2.900" fill="#3c7cc4" stroke="#1a4888" stroke-width=".7"/><circle cx="4.600" cy="2.700" r="1.100" fill="#80b4e8"/></svg>
<span class="t" style="left:233.24px;top:435.75px;font-size:12.5px;color:#e4ffff;transform:scaleX(0.8263);transform-origin:0 0;">Original</span>
<span class="t" style="right:1074.62px;top:435.75px;font-size:12.5px;color:#e4ffff;transform:scaleX(0.8802);transform-origin:100% 0;">9870</span>
<span class="t" style="right:994.61px;top:435.75px;font-size:12.5px;color:#e4ffff;transform:scaleX(0.8600);transform-origin:100% 0;">0</span>
<span class="t" style="right:920.30px;top:435.75px;font-size:12.5px;color:#e4ffff;transform:scaleX(0.8714);transform-origin:100% 0;">200500</span>
<span class="t" style="left:931.81px;top:435.75px;font-size:12.5px;color:#e4ffff;transform:scaleX(0.8757);transform-origin:0 0;">97286</span>
<span class="t" style="left:1083.00px;top:435.75px;font-size:12.5px;color:#e4ffff;transform:scaleX(0.9151);transform-origin:0 0;">W..</span>
<span class="t" style="left:1111.62px;top:435.75px;font-size:12.5px;color:#e4ffff;transform:scaleX(0.8754);transform-origin:0 0;">05.08.1970</span>
<span class="t" style="left:1196.17px;top:435.75px;font-size:12.5px;color:#e4ffff;transform:scaleX(0.8807);transform-origin:0 0;">12.09.1994</span>
<span class="t" style="left:1343.21px;top:435.75px;font-size:12.5px;color:#e4ffff;transform:scaleX(0.8799);transform-origin:0 0;">SCHWAB</span>
<div style="left:231px;top:450px;width:1169px;height:16px;background:#0078d7;"></div>
<div style="left:231px;top:466px;width:1169px;height:1px;background:#a8f0ff;"></div>
<div style="left:210px;top:466px;width:21px;height:1px;background:#e6e6e6;"></div>
<svg style="left:219px;top:452px;" width="8" height="12" viewBox="0 0 8 12"><path d="M.6 11.300c-.4-3.300 1.200-5 3.400-5s3.800 1.700 3.400 5c-1.300 1-5.500 1-6.800 0z" fill="#4aa2ac" stroke="#2a6c7c" stroke-width=".7"/><path d="M2.700 6.800l1.300 1.800 1.300-1.800z" fill="#a0dce0"/><circle cx="4" cy="3.400" r="2.900" fill="#3c7cc4" stroke="#1a4888" stroke-width=".7"/><circle cx="4.600" cy="2.700" r="1.100" fill="#80b4e8"/></svg>
<span class="t" style="left:233.24px;top:452.75px;font-size:12.5px;color:#e4ffff;transform:scaleX(0.8263);transform-origin:0 0;">Original</span>
<span class="t" style="right:1074.62px;top:452.75px;font-size:12.5px;color:#e4ffff;transform:scaleX(0.8802);transform-origin:100% 0;">9870</span>
<span class="t" style="right:994.50px;top:452.75px;font-size:12.5px;color:#e4ffff;transform:scaleX(0.8600);transform-origin:100% 0;">2</span>
<span class="t" style="right:920.30px;top:452.75px;font-size:12.5px;color:#e4ffff;transform:scaleX(0.8714);transform-origin:100% 0;">200800</span>
<span class="t" style="left:931.81px;top:452.75px;font-size:12.5px;color:#e4ffff;transform:scaleX(0.8757);transform-origin:0 0;">97353</span>
<span class="t" style="left:1083.00px;top:452.75px;font-size:12.5px;color:#e4ffff;transform:scaleX(0.9151);transform-origin:0 0;">W..</span>
<span class="t" style="left:1111.62px;top:452.75px;font-size:12.5px;color:#e4ffff;transform:scaleX(0.8772);transform-origin:0 0;">01.01.1982</span>
<span class="t" style="left:1196.62px;top:452.75px;font-size:12.5px;color:#e4ffff;transform:scaleX(0.8736);transform-origin:0 0;">01.10.2004</span>
<span class="t" style="left:1343.16px;top:452.75px;font-size:12.5px;color:#e4ffff;transform:scaleX(0.8697);transform-origin:0 0;">GOD</span>
<div style="left:231px;top:467px;width:1169px;height:16px;background:#0078d7;"></div>
<div style="left:231px;top:483px;width:1169px;height:1px;background:#a8f0ff;"></div>
<div style="left:210px;top:483px;width:21px;height:1px;background:#e6e6e6;"></div>
<svg style="left:219px;top:469px;" width="8" height="12" viewBox="0 0 8 12"><path d="M.6 11.300c-.4-3.300 1.200-5 3.400-5s3.800 1.700 3.400 5c-1.300 1-5.500 1-6.800 0z" fill="#4aa2ac" stroke="#2a6c7c" stroke-width=".7"/><path d="M2.700 6.800l1.300 1.800 1.300-1.800z" fill="#a0dce0"/><circle cx="4" cy="3.400" r="2.900" fill="#3c7cc4" stroke="#1a4888" stroke-width=".7"/><circle cx="4.600" cy="2.700" r="1.100" fill="#80b4e8"/></svg>
<span class="t" style="left:233.24px;top:469.75px;font-size:12.5px;color:#e4ffff;transform:scaleX(0.8263);transform-origin:0 0;">Original</span>
<span class="t" style="right:1074.62px;top:469.75px;font-size:12.5px;color:#e4ffff;transform:scaleX(0.8802);transform-origin:100% 0;">9870</span>
<span class="t" style="right:994.56px;top:469.75px;font-size:12.5px;color:#e4ffff;transform:scaleX(0.8600);transform-origin:100% 0;">3</span>
<span class="t" style="right:920.30px;top:469.75px;font-size:12.5px;color:#e4ffff;transform:scaleX(0.8714);transform-origin:100% 0;">200960</span>
<span class="t" style="left:931.81px;top:469.75px;font-size:12.5px;color:#e4ffff;transform:scaleX(0.8708);transform-origin:0 0;">97074</span>
<span class="t" style="left:1083.00px;top:469.75px;font-size:12.5px;color:#e4ffff;transform:scaleX(0.9151);transform-origin:0 0;">W..</span>
<span class="t" style="left:1111.62px;top:469.75px;font-size:12.5px;color:#e4ffff;transform:scaleX(0.8763);transform-origin:0 0;">02.09.1986</span>
<span class="t" style="left:1196.61px;top:469.75px;font-size:12.5px;color:#e4ffff;transform:scaleX(0.8907);transform-origin:0 0;">01.01.2011</span>
<span class="t" style="left:1343.21px;top:469.75px;font-size:12.5px;color:#e4ffff;transform:scaleX(0.8799);transform-origin:0 0;">SCHWAB</span>
<div style="left:231px;top:484px;width:1169px;height:16px;background:#0078d7;"></div>
<div style="left:231px;top:500px;width:1169px;height:1px;background:#a8f0ff;"></div>
<div style="left:210px;top:500px;width:21px;height:1px;background:#e6e6e6;"></div>
<svg style="left:219px;top:486px;" width="8" height="12" viewBox="0 0 8 12"><path d="M.6 11.300c-.4-3.300 1.200-5 3.400-5s3.800 1.700 3.400 5c-1.300 1-5.500 1-6.800 0z" fill="#4aa2ac" stroke="#2a6c7c" stroke-width=".7"/><path d="M2.700 6.800l1.300 1.800 1.300-1.800z" fill="#a0dce0"/><circle cx="4" cy="3.400" r="2.900" fill="#3c7cc4" stroke="#1a4888" stroke-width=".7"/><circle cx="4.600" cy="2.700" r="1.100" fill="#80b4e8"/></svg>
<span class="t" style="left:233.24px;top:486.75px;font-size:12.5px;color:#e4ffff;transform:scaleX(0.8263);transform-origin:0 0;">Original</span>
<span class="t" style="right:1074.62px;top:486.75px;font-size:12.5px;color:#e4ffff;transform:scaleX(0.8802);transform-origin:100% 0;">9870</span>
<span class="t" style="right:995.50px;top:486.75px;font-size:12.5px;color:#e4ffff;transform:scaleX(0.8600);transform-origin:100% 0;">1</span>
<span class="t" style="right:920.30px;top:486.75px;font-size:12.5px;color:#e4ffff;transform:scaleX(0.8674);transform-origin:100% 0;">300200</span>
<span class="t" style="left:931.75px;top:486.75px;font-size:12.5px;color:#e4ffff;transform:scaleX(0.8790);transform-origin:0 0;">65239</span>
<span class="t" style="left:1082.05px;top:486.75px;font-size:12.5px;color:#e4ffff;transform:scaleX(0.9496);transform-origin:0 0;">H...</span>
<span class="t" style="left:1111.62px;top:486.75px;font-size:12.5px;color:#e4ffff;transform:scaleX(0.8763);transform-origin:0 0;">01.04.1963</span>
<span class="t" style="left:1196.62px;top:486.75px;font-size:12.5px;color:#e4ffff;transform:scaleX(0.8754);transform-origin:0 0;">01.04.2000</span>
<span class="t" style="left:1343.21px;top:486.75px;font-size:12.5px;color:#e4ffff;transform:scaleX(0.8799);transform-origin:0 0;">SCHWAB</span>
<div style="left:231px;top:501px;width:1169px;height:16px;background:#0078d7;"></div>
<div style="left:231px;top:517px;width:1169px;height:1px;background:#a8f0ff;"></div>
<div style="left:210px;top:517px;width:21px;height:1px;background:#e6e6e6;"></div>
<svg style="left:219px;top:503px;" width="8" height="12" viewBox="0 0 8 12"><path d="M.6 11.300c-.4-3.300 1.200-5 3.400-5s3.800 1.700 3.400 5c-1.300 1-5.500 1-6.800 0z" fill="#4aa2ac" stroke="#2a6c7c" stroke-width=".7"/><path d="M2.700 6.800l1.300 1.800 1.300-1.800z" fill="#a0dce0"/><circle cx="4" cy="3.400" r="2.900" fill="#3c7cc4" stroke="#1a4888" stroke-width=".7"/><circle cx="4.600" cy="2.700" r="1.100" fill="#80b4e8"/></svg>
<span class="t" style="left:233.24px;top:503.75px;font-size:12.5px;color:#e4ffff;transform:scaleX(0.8263);transform-origin:0 0;">Original</span>
<span class="t" style="right:1074.62px;top:503.75px;font-size:12.5px;color:#e4ffff;transform:scaleX(0.8802);transform-origin:100% 0;">9870</span>
<span class="t" style="right:995.50px;top:503.75px;font-size:12.5px;color:#e4ffff;transform:scaleX(0.8600);transform-origin:100% 0;">1</span>
<span class="t" style="right:920.30px;top:503.75px;font-size:12.5px;color:#e4ffff;transform:scaleX(0.8674);transform-origin:100% 0;">300210</span>
<span class="t" style="left:931.86px;top:503.75px;font-size:12.5px;color:#e4ffff;transform:scaleX(0.8725);transform-origin:0 0;">83700</span>
<span class="t" style="left:1082.05px;top:503.75px;font-size:12.5px;color:#e4ffff;transform:scaleX(0.9496);transform-origin:0 0;">R...</span>
<span class="t" style="left:1111.62px;top:503.75px;font-size:12.5px;color:#e4ffff;transform:scaleX(0.8763);transform-origin:0 0;">01.04.1963</span>
<span class="t" style="left:1196.17px;top:503.75px;font-size:12.5px;color:#e4ffff;transform:scaleX(0.8843);transform-origin:0 0;">15.08.2009</span>
<span class="t" style="left:1343.21px;top:503.75px;font-size:12.5px;color:#e4ffff;transform:scaleX(0.8799);transform-origin:0 0;">SCHWAB</span>
<div style="left:231px;top:518px;width:1169px;height:16px;background:#0078d7;"></div>
<div style="left:231px;top:534px;width:1169px;height:1px;background:#a8f0ff;"></div>
<div style="left:210px;top:534px;width:21px;height:1px;background:#e6e6e6;"></div>
<svg style="left:219px;top:520px;" width="8" height="12" viewBox="0 0 8 12"><path d="M.6 11.300c-.4-3.300 1.200-5 3.400-5s3.800 1.700 3.400 5c-1.300 1-5.500 1-6.800 0z" fill="#4aa2ac" stroke="#2a6c7c" stroke-width=".7"/><path d="M2.700 6.800l1.300 1.800 1.300-1.800z" fill="#a0dce0"/><circle cx="4" cy="3.400" r="2.900" fill="#3c7cc4" stroke="#1a4888" stroke-width=".7"/><circle cx="4.600" cy="2.700" r="1.100" fill="#80b4e8"/></svg>
<span class="t" style="left:233.24px;top:520.75px;font-size:12.5px;color:#e4ffff;transform:scaleX(0.8263);transform-origin:0 0;">Original</span>
<span class="t" style="right:1074.62px;top:520.75px;font-size:12.5px;color:#e4ffff;transform:scaleX(0.8802);transform-origin:100% 0;">9870</span>
<span class="t" style="right:995.50px;top:520.75px;font-size:12.5px;color:#e4ffff;transform:scaleX(0.8600);transform-origin:100% 0;">1</span>
<span class="t" style="right:920.30px;top:520.75px;font-size:12.5px;color:#e4ffff;transform:scaleX(0.8674);transform-origin:100% 0;">300400</span>
<span class="t" style="left:931.92px;top:520.75px;font-size:12.5px;color:#e4ffff;transform:scaleX(0.8725);transform-origin:0 0;">35285</span>
<span class="t" style="left:1082.44px;top:520.75px;font-size:12.5px;color:#e4ffff;transform:scaleX(0.8949);transform-origin:0 0;">G...</span>
<span class="t" style="left:1111.62px;top:520.75px;font-size:12.5px;color:#e4ffff;transform:scaleX(0.8772);transform-origin:0 0;">02.12.1961</span>
<span class="t" style="left:1196.62px;top:520.75px;font-size:12.5px;color:#e4ffff;transform:scaleX(0.8772);transform-origin:0 0;">01.10.1999</span>
<span class="t" style="left:1343.21px;top:520.75px;font-size:12.5px;color:#e4ffff;transform:scaleX(0.8799);transform-origin:0 0;">SCHWAB</span>
<div style="left:231px;top:535px;width:1169px;height:16px;background:#0078d7;"></div>
<div style="left:231px;top:551px;width:1169px;height:1px;background:#a8f0ff;"></div>
<div style="left:210px;top:551px;width:21px;height:1px;background:#e6e6e6;"></div>
<svg style="left:219px;top:537px;" width="8" height="12" viewBox="0 0 8 12"><path d="M.6 11.300c-.4-3.300 1.200-5 3.400-5s3.800 1.700 3.400 5c-1.300 1-5.500 1-6.800 0z" fill="#4aa2ac" stroke="#2a6c7c" stroke-width=".7"/><path d="M2.700 6.800l1.300 1.800 1.300-1.800z" fill="#a0dce0"/><circle cx="4" cy="3.400" r="2.900" fill="#3c7cc4" stroke="#1a4888" stroke-width=".7"/><circle cx="4.600" cy="2.700" r="1.100" fill="#80b4e8"/></svg>
<span class="t" style="left:233.24px;top:537.75px;font-size:12.5px;color:#e4ffff;transform:scaleX(0.8263);transform-origin:0 0;">Original</span>
<span class="t" style="right:1074.62px;top:537.75px;font-size:12.5px;color:#e4ffff;transform:scaleX(0.8802);transform-origin:100% 0;">9870</span>
<span class="t" style="right:994.50px;top:537.75px;font-size:12.5px;color:#e4ffff;transform:scaleX(0.8600);transform-origin:100% 0;">2</span>
<span class="t" style="right:920.30px;top:537.75px;font-size:12.5px;color:#e4ffff;transform:scaleX(0.8674);transform-origin:100% 0;">300410</span>
<span class="t" style="left:931.92px;top:537.75px;font-size:12.5px;color:#e4ffff;transform:scaleX(0.8725);transform-origin:0 0;">35285</span>
<span class="t" style="left:1082.44px;top:537.75px;font-size:12.5px;color:#e4ffff;transform:scaleX(0.8949);transform-origin:0 0;">G...</span>
<span class="t" style="left:1111.62px;top:537.75px;font-size:12.5px;color:#e4ffff;transform:scaleX(0.8772);transform-origin:0 0;">02.12.1952</span>
<span class="t" style="left:1196.17px;top:537.75px;font-size:12.5px;color:#e4ffff;transform:scaleX(0.8834);transform-origin:0 0;">15.09.2005</span>
<span class="t" style="left:1342.84px;top:537.75px;font-size:12.5px;color:#e4ffff;transform:scaleX(0.8605);transform-origin:0 0;">PRESALES</span>
<div style="left:231px;top:552px;width:1169px;height:16px;background:#0078d7;"></div>
<div style="left:231px;top:568px;width:1169px;height:1px;background:#a8f0ff;"></div>
<div style="left:210px;top:568px;width:21px;height:1px;background:#e6e6e6;"></div>
<svg style="left:219px;top:554px;" width="8" height="12" viewBox="0 0 8 12"><path d="M.6 11.300c-.4-3.300 1.200-5 3.400-5s3.800 1.700 3.400 5c-1.300 1-5.500 1-6.800 0z" fill="#4aa2ac" stroke="#2a6c7c" stroke-width=".7"/><path d="M2.700 6.800l1.300 1.800 1.300-1.800z" fill="#a0dce0"/><circle cx="4" cy="3.400" r="2.900" fill="#3c7cc4" stroke="#1a4888" stroke-width=".7"/><circle cx="4.600" cy="2.700" r="1.100" fill="#80b4e8"/></svg>
<span class="t" style="left:233.24px;top:554.75px;font-size:12.5px;color:#e4ffff;transform:scaleX(0.8263);transform-origin:0 0;">Original</span>
<span class="t" style="right:1074.62px;top:554.75px;font-size:12.5px;color:#e4ffff;transform:scaleX(0.8802);transform-origin:100% 0;">9870</span>
<span class="t" style="right:995.50px;top:554.75px;font-size:12.5px;color:#e4ffff;transform:scaleX(0.8600);transform-origin:100% 0;">1</span>
<span class="t" style="right:920.30px;top:554.75px;font-size:12.5px;color:#e4ffff;transform:scaleX(0.8674);transform-origin:100% 0;">300500</span>
<span class="t" style="left:932.08px;top:554.75px;font-size:12.5px;color:#e4ffff;transform:scaleX(0.8676);transform-origin:0 0;">46045</span>
<span class="t" style="left:1082.50px;top:554.75px;font-size:12.5px;color:#e4ffff;transform:scaleX(0.8919);transform-origin:0 0;">O...</span>
<span class="t" style="left:1111.62px;top:554.75px;font-size:12.5px;color:#e4ffff;transform:scaleX(0.8772);transform-origin:0 0;">03.09.1967</span>
<span class="t" style="left:1196.16px;top:554.75px;font-size:12.5px;color:#e4ffff;transform:scaleX(0.8981);transform-origin:0 0;">15.11.2001</span>
<span class="t" style="left:1343.21px;top:554.75px;font-size:12.5px;color:#e4ffff;transform:scaleX(0.8799);transform-origin:0 0;">SCHWAB</span>
<div style="left:231px;top:569px;width:1169px;height:16px;background:#0078d7;"></div>
<div style="left:231px;top:585px;width:1169px;height:1px;background:#a8f0ff;"></div>
<div style="left:210px;top:585px;width:21px;height:1px;background:#e6e6e6;"></div>
<svg style="left:219px;top:571px;" width="8" height="12" viewBox="0 0 8 12"><path d="M.6 11.300c-.4-3.300 1.200-5 3.400-5s3.800 1.700 3.400 5c-1.300 1-5.500 1-6.800 0z" fill="#4aa2ac" stroke="#2a6c7c" stroke-width=".7"/><path d="M2.700 6.800l1.300 1.800 1.300-1.800z" fill="#a0dce0"/><circle cx="4" cy="3.400" r="2.900" fill="#3c7cc4" stroke="#1a4888" stroke-width=".7"/><circle cx="4.600" cy="2.700" r="1.100" fill="#80b4e8"/></svg>
<span class="t" style="left:233.24px;top:571.75px;font-size:12.5px;color:#e4ffff;transform:scaleX(0.8263);transform-origin:0 0;">Original</span>
<span class="t" style="right:1074.62px;top:571.75px;font-size:12.5px;color:#e4ffff;transform:scaleX(0.8802);transform-origin:100% 0;">9870</span>
<span class="t" style="right:995.50px;top:571.75px;font-size:12.5px;color:#e4ffff;transform:scaleX(0.8600);transform-origin:100% 0;">1</span>
<span class="t" style="right:920.30px;top:571.75px;font-size:12.5px;color:#e4ffff;transform:scaleX(0.8674);transform-origin:100% 0;">300800</span>
<span class="t" style="left:931.81px;top:571.75px;font-size:12.5px;color:#e4ffff;transform:scaleX(0.8741);transform-origin:0 0;">97080</span>
<span class="t" style="left:1083.00px;top:571.75px;font-size:12.5px;color:#e4ffff;transform:scaleX(0.9151);transform-origin:0 0;">W..</span>
<span class="t" style="left:1111.62px;top:571.75px;font-size:12.5px;color:#e4ffff;transform:scaleX(0.8763);transform-origin:0 0;">08.07.1965</span>
<span class="t" style="left:1196.62px;top:571.75px;font-size:12.5px;color:#e4ffff;transform:scaleX(0.8736);transform-origin:0 0;">01.10.2004</span>
<span class="t" style="left:1343.21px;top:571.75px;font-size:12.5px;color:#e4ffff;transform:scaleX(0.8799);transform-origin:0 0;">SCHWAB</span>
<div style="left:231px;top:586px;width:1169px;height:16px;background:#abdcff;"></div>
<div style="left:210px;top:602px;width:21px;height:1px;background:#ececec;"></div>
<svg style="left:219px;top:588px;" width="8" height="12" viewBox="0 0 8 12"><path d="M.6 11.300c-.4-3.300 1.200-5 3.400-5s3.800 1.700 3.400 5c-1.300 1-5.500 1-6.800 0z" fill="#a4dca0" stroke="#58a058" stroke-width=".7"/><path d="M2.700 6.800l1.300 1.800 1.300-1.800z" fill="#f0fcf0"/><circle cx="4" cy="3.400" r="2.900" fill="#7c7c7c" stroke="#2c2c2c" stroke-width=".7"/><circle cx="4.700" cy="2.800" r="1.200" fill="#c8c8c8"/></svg>
<span class="t" style="left:233.24px;top:588.75px;font-size:12.5px;color:#000;transform:scaleX(0.8263);transform-origin:0 0;">Original</span>
<span class="t" style="right:1074.62px;top:588.75px;font-size:12.5px;color:#000;transform:scaleX(0.8802);transform-origin:100% 0;">9870</span>
<span class="t" style="right:994.56px;top:588.75px;font-size:12.5px;color:#000;transform:scaleX(0.8600);transform-origin:100% 0;">3</span>
<span class="t" style="right:920.30px;top:588.75px;font-size:12.5px;color:#000;transform:scaleX(0.8674);transform-origin:100% 0;">300900</span>
<span class="t" style="left:931.81px;top:588.75px;font-size:12.5px;color:#000;transform:scaleX(0.8708);transform-origin:0 0;">97074</span>
<span class="t" style="left:1083.00px;top:588.75px;font-size:12.5px;color:#000;transform:scaleX(0.9151);transform-origin:0 0;">W..</span>
<span class="t" style="left:1111.62px;top:588.75px;font-size:12.5px;color:#000;transform:scaleX(0.8772);transform-origin:0 0;">30.01.1977</span>
<span class="t" style="left:1196.17px;top:588.75px;font-size:12.5px;color:#000;transform:scaleX(0.8834);transform-origin:0 0;">15.03.2005</span>
<span class="t" style="left:1343.21px;top:588.75px;font-size:12.5px;color:#000;transform:scaleX(0.8799);transform-origin:0 0;">SCHWAB</span>
<div style="left:231px;top:603px;width:1169px;height:16px;background:#fff;"></div>
<div style="left:210px;top:619px;width:21px;height:1px;background:#ececec;"></div>
<svg style="left:219px;top:605px;" width="8" height="12" viewBox="0 0 8 12"><path d="M.6 11.300c-.4-3.300 1.200-5 3.400-5s3.800 1.700 3.400 5c-1.300 1-5.500 1-6.800 0z" fill="#a4dca0" stroke="#58a058" stroke-width=".7"/><path d="M2.700 6.800l1.300 1.800 1.300-1.800z" fill="#f0fcf0"/><circle cx="4" cy="3.400" r="2.900" fill="#7c7c7c" stroke="#2c2c2c" stroke-width=".7"/><circle cx="4.700" cy="2.800" r="1.200" fill="#c8c8c8"/></svg>
<span class="t" style="left:233.24px;top:605.75px;font-size:12.5px;color:#000;transform:scaleX(0.8263);transform-origin:0 0;">Original</span>
<span class="t" style="right:1074.62px;top:605.75px;font-size:12.5px;color:#000;transform:scaleX(0.8802);transform-origin:100% 0;">9870</span>
<span class="t" style="right:995.50px;top:605.75px;font-size:12.5px;color:#000;transform:scaleX(0.8600);transform-origin:100% 0;">1</span>
<span class="t" style="right:920.30px;top:605.75px;font-size:12.5px;color:#000;transform:scaleX(0.8634);transform-origin:100% 0;">400200</span>
<span class="t" style="left:931.75px;top:605.75px;font-size:12.5px;color:#000;transform:scaleX(0.8757);transform-origin:0 0;">60320</span>
<span class="t" style="left:1081.87px;top:605.75px;font-size:12.5px;color:#000;transform:scaleX(1.1330);transform-origin:0 0;">F...</span>
<span class="t" style="left:1111.62px;top:605.75px;font-size:12.5px;color:#000;transform:scaleX(0.8754);transform-origin:0 0;">06.05.1960</span>
<span class="t" style="left:1196.62px;top:605.75px;font-size:12.5px;color:#000;transform:scaleX(0.8772);transform-origin:0 0;">01.04.1981</span>
<span class="t" style="left:1342.80px;top:605.75px;font-size:12.5px;color:#000;transform:scaleX(0.9047);transform-origin:0 0;">PLATZ-4</span>
<div style="left:231px;top:620px;width:1169px;height:16px;background:#abdcff;"></div>
<div style="left:210px;top:636px;width:21px;height:1px;background:#ececec;"></div>
<svg style="left:219px;top:622px;" width="8" height="12" viewBox="0 0 8 12"><path d="M.6 11.300c-.4-3.300 1.200-5 3.400-5s3.800 1.700 3.400 5c-1.300 1-5.500 1-6.800 0z" fill="#a4dca0" stroke="#58a058" stroke-width=".7"/><path d="M2.700 6.800l1.300 1.800 1.300-1.800z" fill="#f0fcf0"/><circle cx="4" cy="3.400" r="2.900" fill="#7c7c7c" stroke="#2c2c2c" stroke-width=".7"/><circle cx="4.700" cy="2.800" r="1.200" fill="#c8c8c8"/></svg>
<span class="t" style="left:233.24px;top:622.75px;font-size:12.5px;color:#000;transform:scaleX(0.8263);transform-origin:0 0;">Original</span>
<span class="t" style="right:1074.62px;top:622.75px;font-size:12.5px;color:#000;transform:scaleX(0.8802);transform-origin:100% 0;">9870</span>
<span class="t" style="right:995.50px;top:622.75px;font-size:12.5px;color:#000;transform:scaleX(0.8600);transform-origin:100% 0;">1</span>
<span class="t" style="right:920.30px;top:622.75px;font-size:12.5px;color:#000;transform:scaleX(0.8634);transform-origin:100% 0;">400410</span>
<span class="t" style="left:931.73px;top:622.75px;font-size:12.5px;color:#000;transform:scaleX(0.9042);transform-origin:0 0;">60311</span>
<span class="t" style="left:1081.87px;top:622.75px;font-size:12.5px;color:#000;transform:scaleX(1.1330);transform-origin:0 0;">F...</span>
<span class="t" style="left:1111.62px;top:622.75px;font-size:12.5px;color:#000;transform:scaleX(0.8763);transform-origin:0 0;">02.09.1953</span>
<span class="t" style="left:1196.62px;top:622.75px;font-size:12.5px;color:#000;transform:scaleX(0.8763);transform-origin:0 0;">01.10.2005</span>
<span class="t" style="left:1343.21px;top:622.75px;font-size:12.5px;color:#000;transform:scaleX(0.8799);transform-origin:0 0;">SCHWAB</span>
<div style="left:231px;top:637px;width:1169px;height:16px;background:#fff;"></div>
<div style="left:210px;top:653px;width:21px;height:1px;background:#ececec;"></div>
<svg style="left:219px;top:639px;" width="8" height="12" viewBox="0 0 8 12"><path d="M.6 11.300c-.4-3.300 1.200-5 3.400-5s3.800 1.700 3.400 5c-1.300 1-5.500 1-6.800 0z" fill="#a4dca0" stroke="#58a058" stroke-width=".7"/><path d="M2.700 6.800l1.300 1.800 1.300-1.800z" fill="#f0fcf0"/><circle cx="4" cy="3.400" r="2.900" fill="#7c7c7c" stroke="#2c2c2c" stroke-width=".7"/><circle cx="4.700" cy="2.800" r="1.200" fill="#c8c8c8"/></svg>
<span class="t" style="left:233.24px;top:639.75px;font-size:12.5px;color:#000;transform:scaleX(0.8263);transform-origin:0 0;">Original</span>
<span class="t" style="right:1074.62px;top:639.75px;font-size:12.5px;color:#000;transform:scaleX(0.8802);transform-origin:100% 0;">9870</span>
<span class="t" style="right:995.50px;top:639.75px;font-size:12.5px;color:#000;transform:scaleX(0.8600);transform-origin:100% 0;">1</span>
<span class="t" style="right:920.30px;top:639.75px;font-size:12.5px;color:#000;transform:scaleX(0.8634);transform-origin:100% 0;">400600</span>
<span class="t" style="left:931.81px;top:639.75px;font-size:12.5px;color:#000;transform:scaleX(0.8757);transform-origin:0 0;">97535</span>
<span class="t" style="left:1083.00px;top:639.75px;font-size:12.5px;color:#000;transform:scaleX(0.9151);transform-origin:0 0;">W..</span>
<span class="t" style="left:1111.62px;top:639.75px;font-size:12.5px;color:#000;transform:scaleX(0.8763);transform-origin:0 0;">31.07.1976</span>
<span class="t" style="left:1196.62px;top:639.75px;font-size:12.5px;color:#000;transform:scaleX(0.8736);transform-origin:0 0;">01.10.2004</span>
<span class="t" style="left:1343.16px;top:639.75px;font-size:12.5px;color:#000;transform:scaleX(0.8697);transform-origin:0 0;">GOD</span>
<div style="left:231px;top:654px;width:1169px;height:16px;background:#abdcff;"></div>
<div style="left:210px;top:670px;width:21px;height:1px;background:#ececec;"></div>
<svg style="left:219px;top:656px;" width="8" height="12" viewBox="0 0 8 12"><path d="M.6 11.300c-.4-3.300 1.200-5 3.400-5s3.800 1.700 3.400 5c-1.300 1-5.500 1-6.800 0z" fill="#a4dca0" stroke="#58a058" stroke-width=".7"/><path d="M2.700 6.800l1.300 1.800 1.300-1.800z" fill="#f0fcf0"/><circle cx="4" cy="3.400" r="2.900" fill="#7c7c7c" stroke="#2c2c2c" stroke-width=".7"/><circle cx="4.700" cy="2.800" r="1.200" fill="#c8c8c8"/></svg>
<span class="t" style="left:233.24px;top:656.75px;font-size:12.5px;color:#000;transform:scaleX(0.8263);transform-origin:0 0;">Original</span>
<span class="t" style="right:1074.62px;top:656.75px;font-size:12.5px;color:#000;transform:scaleX(0.8802);transform-origin:100% 0;">9870</span>
<span class="t" style="right:995.50px;top:656.75px;font-size:12.5px;color:#000;transform:scaleX(0.8600);transform-origin:100% 0;">1</span>
<span class="t" style="right:920.19px;top:656.75px;font-size:12.5px;color:#000;transform:scaleX(0.8661);transform-origin:100% 0;">400619</span>
<span class="t" style="left:931.81px;top:656.75px;font-size:12.5px;color:#000;transform:scaleX(0.8757);transform-origin:0 0;">97775</span>
<span class="t" style="left:1082.01px;top:656.75px;font-size:12.5px;color:#000;transform:scaleX(0.9888);transform-origin:0 0;">B...</span>
<span class="t" style="left:1111.17px;top:656.75px;font-size:12.5px;color:#000;transform:scaleX(0.8825);transform-origin:0 0;">15.07.1980</span>
<span class="t" style="left:1196.62px;top:656.75px;font-size:12.5px;color:#000;transform:scaleX(0.8763);transform-origin:0 0;">01.04.2006</span>
<span class="t" style="left:1343.21px;top:656.75px;font-size:12.5px;color:#000;transform:scaleX(0.8799);transform-origin:0 0;">SCHWAB</span>
<div style="left:231px;top:671px;width:1169px;height:16px;background:#fff;"></div>
<div style="left:210px;top:687px;width:21px;height:1px;background:#ececec;"></div>
<svg style="left:219px;top:673px;" width="8" height="12" viewBox="0 0 8 12"><path d="M.6 11.300c-.4-3.300 1.200-5 3.400-5s3.800 1.700 3.400 5c-1.300 1-5.500 1-6.800 0z" fill="#a4dca0" stroke="#58a058" stroke-width=".7"/><path d="M2.700 6.800l1.300 1.800 1.300-1.800z" fill="#f0fcf0"/><circle cx="4" cy="3.400" r="2.900" fill="#7c7c7c" stroke="#2c2c2c" stroke-width=".7"/><circle cx="4.700" cy="2.800" r="1.200" fill="#c8c8c8"/></svg>
<span class="t" style="left:233.24px;top:673.75px;font-size:12.5px;color:#000;transform:scaleX(0.8263);transform-origin:0 0;">Original</span>
<span class="t" style="right:1074.62px;top:673.75px;font-size:12.5px;color:#000;transform:scaleX(0.8802);transform-origin:100% 0;">9870</span>
<span class="t" style="right:994.61px;top:673.75px;font-size:12.5px;color:#000;transform:scaleX(0.8600);transform-origin:100% 0;">0</span>
<span class="t" style="right:920.30px;top:673.75px;font-size:12.5px;color:#000;transform:scaleX(0.8634);transform-origin:100% 0;">400700</span>
<span class="t" style="left:931.81px;top:673.75px;font-size:12.5px;color:#000;transform:scaleX(0.8773);transform-origin:0 0;">97082</span>
<span class="t" style="left:1083.00px;top:673.75px;font-size:12.5px;color:#000;transform:scaleX(0.9151);transform-origin:0 0;">W..</span>
<span class="t" style="left:1111.62px;top:673.75px;font-size:12.5px;color:#000;transform:scaleX(0.8772);transform-origin:0 0;">30.06.1967</span>
<span class="t" style="left:1196.62px;top:673.75px;font-size:12.5px;color:#000;transform:scaleX(0.8763);transform-origin:0 0;">01.03.2005</span>
<span class="t" style="left:1343.21px;top:673.75px;font-size:12.5px;color:#000;transform:scaleX(0.8799);transform-origin:0 0;">SCHWAB</span>
<div style="left:231px;top:688px;width:1169px;height:16px;background:#abdcff;"></div>
<div style="left:210px;top:704px;width:21px;height:1px;background:#ececec;"></div>
<svg style="left:219px;top:690px;" width="8" height="12" viewBox="0 0 8 12"><path d="M.6 11.300c-.4-3.300 1.200-5 3.400-5s3.800 1.700 3.400 5c-1.300 1-5.500 1-6.800 0z" fill="#a4dca0" stroke="#58a058" stroke-width=".7"/><path d="M2.700 6.800l1.300 1.800 1.300-1.800z" fill="#f0fcf0"/><circle cx="4" cy="3.400" r="2.900" fill="#7c7c7c" stroke="#2c2c2c" stroke-width=".7"/><circle cx="4.700" cy="2.800" r="1.200" fill="#c8c8c8"/></svg>
<span class="t" style="left:233.24px;top:690.75px;font-size:12.5px;color:#000;transform:scaleX(0.8263);transform-origin:0 0;">Original</span>
<span class="t" style="right:1074.62px;top:690.75px;font-size:12.5px;color:#000;transform:scaleX(0.8802);transform-origin:100% 0;">9870</span>
<span class="t" style="right:994.56px;top:690.75px;font-size:12.5px;color:#000;transform:scaleX(0.8600);transform-origin:100% 0;">3</span>
<span class="t" style="right:920.30px;top:690.75px;font-size:12.5px;color:#000;transform:scaleX(0.8634);transform-origin:100% 0;">400800</span>
<span class="t" style="left:931.86px;top:690.75px;font-size:12.5px;color:#000;transform:scaleX(0.8741);transform-origin:0 0;">80333</span>
<span class="t" style="left:1082.12px;top:690.75px;font-size:12.5px;color:#000;transform:scaleX(0.8800);transform-origin:0 0;">M...</span>
<span class="t" style="left:1111.62px;top:690.75px;font-size:12.5px;color:#000;transform:scaleX(0.8754);transform-origin:0 0;">09.10.1960</span>
<span class="t" style="left:1196.62px;top:690.75px;font-size:12.5px;color:#000;transform:scaleX(0.8763);transform-origin:0 0;">01.03.2005</span>
<span class="t" style="left:1343.21px;top:690.75px;font-size:12.5px;color:#000;transform:scaleX(0.8799);transform-origin:0 0;">SCHWAB</span>
<div style="left:231px;top:705px;width:1169px;height:16px;background:#fff;"></div>
<div style="left:210px;top:721px;width:21px;height:1px;background:#ececec;"></div>
<svg style="left:219px;top:707px;" width="8" height="12" viewBox="0 0 8 12"><path d="M.6 11.300c-.4-3.300 1.200-5 3.400-5s3.800 1.700 3.400 5c-1.300 1-5.500 1-6.800 0z" fill="#a4dca0" stroke="#58a058" stroke-width=".7"/><path d="M2.700 6.800l1.300 1.800 1.300-1.800z" fill="#f0fcf0"/><circle cx="4" cy="3.400" r="2.900" fill="#7c7c7c" stroke="#2c2c2c" stroke-width=".7"/><circle cx="4.700" cy="2.800" r="1.200" fill="#c8c8c8"/></svg>
<span class="t" style="left:233.24px;top:707.75px;font-size:12.5px;color:#000;transform:scaleX(0.8263);transform-origin:0 0;">Original</span>
<span class="t" style="right:1074.62px;top:707.75px;font-size:12.5px;color:#000;transform:scaleX(0.8802);transform-origin:100% 0;">9870</span>
<span class="t" style="right:994.61px;top:707.75px;font-size:12.5px;color:#000;transform:scaleX(0.8600);transform-origin:100% 0;">0</span>
<span class="t" style="right:920.30px;top:707.75px;font-size:12.5px;color:#000;transform:scaleX(0.8634);transform-origin:100% 0;">400900</span>
<span class="t" style="left:931.86px;top:707.75px;font-size:12.5px;color:#000;transform:scaleX(0.8757);transform-origin:0 0;">81929</span>
<span class="t" style="left:1082.12px;top:707.75px;font-size:12.5px;color:#000;transform:scaleX(0.8800);transform-origin:0 0;">M...</span>
<span class="t" style="left:1111.45px;top:707.75px;font-size:12.5px;color:#000;transform:scaleX(0.8798);transform-origin:0 0;">25.02.1962</span>
<span class="t" style="left:1196.62px;top:707.75px;font-size:12.5px;color:#000;transform:scaleX(0.8772);transform-origin:0 0;">01.01.2007</span>
<span class="t" style="left:1343.21px;top:707.75px;font-size:12.5px;color:#000;transform:scaleX(0.8799);transform-origin:0 0;">SCHWAB</span>
<div style="left:231px;top:722px;width:1169px;height:16px;background:#abdcff;"></div>
<div style="left:210px;top:738px;width:21px;height:1px;background:#ececec;"></div>
<svg style="left:219px;top:724px;" width="8" height="12" viewBox="0 0 8 12"><path d="M.6 11.300c-.4-3.300 1.200-5 3.400-5s3.800 1.700 3.400 5c-1.300 1-5.500 1-6.800 0z" fill="#a4dca0" stroke="#58a058" stroke-width=".7"/><path d="M2.700 6.800l1.300 1.800 1.300-1.800z" fill="#f0fcf0"/><circle cx="4" cy="3.400" r="2.900" fill="#7c7c7c" stroke="#2c2c2c" stroke-width=".7"/><circle cx="4.700" cy="2.800" r="1.200" fill="#c8c8c8"/></svg>
<span class="t" style="left:233.24px;top:724.75px;font-size:12.5px;color:#000;transform:scaleX(0.8263);transform-origin:0 0;">Original</span>
<span class="t" style="right:1074.62px;top:724.75px;font-size:12.5px;color:#000;transform:scaleX(0.8802);transform-origin:100% 0;">9870</span>
<span class="t" style="right:994.56px;top:724.75px;font-size:12.5px;color:#000;transform:scaleX(0.8600);transform-origin:100% 0;">3</span>
<span class="t" style="right:920.30px;top:724.75px;font-size:12.5px;color:#000;transform:scaleX(0.8634);transform-origin:100% 0;">410900</span>
<span class="t" style="left:931.75px;top:724.75px;font-size:12.5px;color:#000;transform:scaleX(0.8790);transform-origin:0 0;">74172</span>
<span class="t" style="left:1082.05px;top:724.75px;font-size:12.5px;color:#000;transform:scaleX(0.9496);transform-origin:0 0;">N...</span>
<span class="t" style="left:1111.62px;top:724.75px;font-size:12.5px;color:#000;transform:scaleX(0.8763);transform-origin:0 0;">06.09.1985</span>
<span class="t" style="left:1196.62px;top:724.75px;font-size:12.5px;color:#000;transform:scaleX(0.8763);transform-origin:0 0;">01.07.2008</span>
<span class="t" style="left:1342.79px;top:724.75px;font-size:12.5px;color:#000;transform:scaleX(0.9095);transform-origin:0 0;">PLATZ-9</span>
<div style="left:231px;top:739px;width:1169px;height:16px;background:#fff;"></div>
<div style="left:210px;top:755px;width:21px;height:1px;background:#ececec;"></div>
<svg style="left:219px;top:741px;" width="8" height="12" viewBox="0 0 8 12"><path d="M.6 11.300c-.4-3.300 1.200-5 3.400-5s3.800 1.700 3.400 5c-1.300 1-5.500 1-6.800 0z" fill="#a4dca0" stroke="#58a058" stroke-width=".7"/><path d="M2.700 6.800l1.300 1.800 1.300-1.800z" fill="#f0fcf0"/><circle cx="4" cy="3.400" r="2.900" fill="#7c7c7c" stroke="#2c2c2c" stroke-width=".7"/><circle cx="4.700" cy="2.800" r="1.200" fill="#c8c8c8"/></svg>
<span class="t" style="left:233.24px;top:741.75px;font-size:12.5px;color:#000;transform:scaleX(0.8263);transform-origin:0 0;">Original</span>
<span class="t" style="right:1074.62px;top:741.75px;font-size:12.5px;color:#000;transform:scaleX(0.8802);transform-origin:100% 0;">9870</span>
<span class="t" style="right:994.50px;top:741.75px;font-size:12.5px;color:#000;transform:scaleX(0.8600);transform-origin:100% 0;">2</span>
<span class="t" style="right:920.30px;top:741.75px;font-size:12.5px;color:#000;transform:scaleX(0.8687);transform-origin:100% 0;">500100</span>
<span class="t" style="left:931.81px;top:741.75px;font-size:12.5px;color:#000;transform:scaleX(0.8757);transform-origin:0 0;">97286</span>
<span class="t" style="left:1082.46px;top:741.75px;font-size:12.5px;color:#000;transform:scaleX(0.9635);transform-origin:0 0;">S...</span>
<span class="t" style="left:1111.17px;top:741.75px;font-size:12.5px;color:#000;transform:scaleX(0.8834);transform-origin:0 0;">10.07.1965</span>
<span class="t" style="left:1196.17px;top:741.75px;font-size:12.5px;color:#000;transform:scaleX(0.8834);transform-origin:0 0;">15.02.1993</span>
<span class="t" style="left:1342.79px;top:741.75px;font-size:12.5px;color:#000;transform:scaleX(0.9083);transform-origin:0 0;">PLATZ-5</span>
<div style="left:231px;top:756px;width:1169px;height:16px;background:#abdcff;"></div>
<div style="left:210px;top:772px;width:21px;height:1px;background:#ececec;"></div>
<svg style="left:219px;top:758px;" width="8" height="12" viewBox="0 0 8 12"><path d="M.6 11.300c-.4-3.300 1.200-5 3.400-5s3.800 1.700 3.400 5c-1.300 1-5.500 1-6.800 0z" fill="#a4dca0" stroke="#58a058" stroke-width=".7"/><path d="M2.700 6.800l1.300 1.800 1.300-1.800z" fill="#f0fcf0"/><circle cx="4" cy="3.400" r="2.900" fill="#7c7c7c" stroke="#2c2c2c" stroke-width=".7"/><circle cx="4.700" cy="2.800" r="1.200" fill="#c8c8c8"/></svg>
<span class="t" style="left:233.24px;top:758.75px;font-size:12.5px;color:#000;transform:scaleX(0.8263);transform-origin:0 0;">Original</span>
<span class="t" style="right:1074.62px;top:758.75px;font-size:12.5px;color:#000;transform:scaleX(0.8802);transform-origin:100% 0;">9870</span>
<span class="t" style="right:994.61px;top:758.75px;font-size:12.5px;color:#000;transform:scaleX(0.8600);transform-origin:100% 0;">0</span>
<span class="t" style="right:920.30px;top:758.75px;font-size:12.5px;color:#000;transform:scaleX(0.8687);transform-origin:100% 0;">500200</span>
<span class="t" style="left:931.92px;top:758.75px;font-size:12.5px;color:#000;transform:scaleX(0.8725);transform-origin:0 0;">35285</span>
<span class="t" style="left:1082.44px;top:758.75px;font-size:12.5px;color:#000;transform:scaleX(0.8949);transform-origin:0 0;">G...</span>
<span class="t" style="left:1111.16px;top:758.75px;font-size:12.5px;color:#000;transform:scaleX(0.8981);transform-origin:0 0;">11.01.1967</span>
<span class="t" style="left:1196.62px;top:758.75px;font-size:12.5px;color:#000;transform:scaleX(0.8772);transform-origin:0 0;">01.10.1989</span>
<span class="t" style="left:1343.21px;top:758.75px;font-size:12.5px;color:#000;transform:scaleX(0.8799);transform-origin:0 0;">SCHWAB</span>
<div style="left:231px;top:773px;width:1169px;height:16px;background:#fff;"></div>
<div style="left:210px;top:789px;width:21px;height:1px;background:#ececec;"></div>
<svg style="left:219px;top:775px;" width="8" height="12" viewBox="0 0 8 12"><path d="M.6 11.300c-.4-3.300 1.200-5 3.400-5s3.800 1.700 3.400 5c-1.300 1-5.500 1-6.800 0z" fill="#a4dca0" stroke="#58a058" stroke-width=".7"/><path d="M2.700 6.800l1.300 1.800 1.300-1.800z" fill="#f0fcf0"/><circle cx="4" cy="3.400" r="2.900" fill="#7c7c7c" stroke="#2c2c2c" stroke-width=".7"/><circle cx="4.700" cy="2.800" r="1.200" fill="#c8c8c8"/></svg>
<span class="t" style="left:233.24px;top:775.75px;font-size:12.5px;color:#000;transform:scaleX(0.8263);transform-origin:0 0;">Original</span>
<span class="t" style="right:1074.62px;top:775.75px;font-size:12.5px;color:#000;transform:scaleX(0.8802);transform-origin:100% 0;">9870</span>
<span class="t" style="right:995.50px;top:775.75px;font-size:12.5px;color:#000;transform:scaleX(0.8600);transform-origin:100% 0;">1</span>
<span class="t" style="right:920.30px;top:775.75px;font-size:12.5px;color:#000;transform:scaleX(0.8687);transform-origin:100% 0;">500300</span>
<span class="t" style="left:931.81px;top:775.75px;font-size:12.5px;color:#000;transform:scaleX(0.8757);transform-origin:0 0;">97753</span>
<span class="t" style="left:1082.01px;top:775.75px;font-size:12.5px;color:#000;transform:scaleX(0.9888);transform-origin:0 0;">K...</span>
<span class="t" style="left:1111.16px;top:775.75px;font-size:12.5px;color:#000;transform:scaleX(0.8981);transform-origin:0 0;">11.10.1977</span>
<span class="t" style="left:1196.62px;top:775.75px;font-size:12.5px;color:#000;transform:scaleX(0.8754);transform-origin:0 0;">01.03.2000</span>
<span class="t" style="left:1343.21px;top:775.75px;font-size:12.5px;color:#000;transform:scaleX(0.8799);transform-origin:0 0;">SCHWAB</span>
<div style="left:231px;top:790px;width:1169px;height:16px;background:#abdcff;"></div>
<div style="left:210px;top:806px;width:21px;height:1px;background:#ececec;"></div>
<svg style="left:219px;top:792px;" width="8" height="12" viewBox="0 0 8 12"><path d="M.6 11.300c-.4-3.300 1.200-5 3.400-5s3.800 1.700 3.400 5c-1.300 1-5.500 1-6.800 0z" fill="#a4dca0" stroke="#58a058" stroke-width=".7"/><path d="M2.700 6.800l1.300 1.800 1.300-1.800z" fill="#f0fcf0"/><circle cx="4" cy="3.400" r="2.900" fill="#7c7c7c" stroke="#2c2c2c" stroke-width=".7"/><circle cx="4.700" cy="2.800" r="1.200" fill="#c8c8c8"/></svg>
<span class="t" style="left:233.24px;top:792.75px;font-size:12.5px;color:#000;transform:scaleX(0.8263);transform-origin:0 0;">Original</span>
<span class="t" style="right:1074.62px;top:792.75px;font-size:12.5px;color:#000;transform:scaleX(0.8802);transform-origin:100% 0;">9870</span>
<span class="t" style="right:994.61px;top:792.75px;font-size:12.5px;color:#000;transform:scaleX(0.8600);transform-origin:100% 0;">0</span>
<span class="t" style="right:920.30px;top:792.75px;font-size:12.5px;color:#000;transform:scaleX(0.8687);transform-origin:100% 0;">500400</span>
<span class="t" style="left:931.81px;top:792.75px;font-size:12.5px;color:#000;transform:scaleX(0.8741);transform-origin:0 0;">97080</span>
<span class="t" style="left:1083.00px;top:792.75px;font-size:12.5px;color:#000;transform:scaleX(0.9151);transform-origin:0 0;">W..</span>
<span class="t" style="left:1111.62px;top:792.75px;font-size:12.5px;color:#000;transform:scaleX(0.8772);transform-origin:0 0;">08.12.1962</span>
<span class="t" style="left:1196.17px;top:792.75px;font-size:12.5px;color:#000;transform:scaleX(0.8843);transform-origin:0 0;">12.08.1991</span>
<span class="t" style="left:1343.21px;top:792.75px;font-size:12.5px;color:#000;transform:scaleX(0.8799);transform-origin:0 0;">SCHWAB</span>
<div style="left:231px;top:807px;width:1169px;height:16px;background:#fff;"></div>
<div style="left:210px;top:823px;width:21px;height:1px;background:#ececec;"></div>
<svg style="left:219px;top:809px;" width="8" height="12" viewBox="0 0 8 12"><path d="M.6 11.300c-.4-3.300 1.200-5 3.400-5s3.800 1.700 3.400 5c-1.300 1-5.500 1-6.800 0z" fill="#a4dca0" stroke="#58a058" stroke-width=".7"/><path d="M2.700 6.800l1.300 1.800 1.300-1.800z" fill="#f0fcf0"/><circle cx="4" cy="3.400" r="2.900" fill="#7c7c7c" stroke="#2c2c2c" stroke-width=".7"/><circle cx="4.700" cy="2.800" r="1.200" fill="#c8c8c8"/></svg>
<span class="t" style="left:233.24px;top:809.75px;font-size:12.5px;color:#000;transform:scaleX(0.8263);transform-origin:0 0;">Original</span>
<span class="t" style="right:1074.62px;top:809.75px;font-size:12.5px;color:#000;transform:scaleX(0.8802);transform-origin:100% 0;">9870</span>
<span class="t" style="right:995.50px;top:809.75px;font-size:12.5px;color:#000;transform:scaleX(0.8600);transform-origin:100% 0;">1</span>
<span class="t" style="right:920.30px;top:809.75px;font-size:12.5px;color:#000;transform:scaleX(0.8687);transform-origin:100% 0;">500410</span>
<span class="t" style="left:931.92px;top:809.75px;font-size:12.5px;color:#000;transform:scaleX(0.8725);transform-origin:0 0;">35285</span>
<span class="t" style="left:1082.44px;top:809.75px;font-size:12.5px;color:#000;transform:scaleX(0.8949);transform-origin:0 0;">G...</span>
<span class="t" style="left:1111.45px;top:809.75px;font-size:12.5px;color:#000;transform:scaleX(0.8789);transform-origin:0 0;">25.01.1953</span>
<span class="t" style="left:1196.62px;top:809.75px;font-size:12.5px;color:#000;transform:scaleX(0.8763);transform-origin:0 0;">01.10.2005</span>
<span class="t" style="left:1343.21px;top:809.75px;font-size:12.5px;color:#000;transform:scaleX(0.8799);transform-origin:0 0;">SCHWAB</span>
<div style="left:270px;top:229px;width:1px;height:357px;background:#a8f0ff;"></div>
<div style="left:270px;top:586px;width:1px;height:237px;background:#fff;"></div>
<div style="left:356px;top:229px;width:1px;height:357px;background:#a8f0ff;"></div>
<div style="left:356px;top:586px;width:1px;height:237px;background:#fff;"></div>
<div style="left:436px;top:229px;width:1px;height:357px;background:#a8f0ff;"></div>
<div style="left:436px;top:586px;width:1px;height:237px;background:#fff;"></div>
<div style="left:510px;top:229px;width:1px;height:357px;background:#a8f0ff;"></div>
<div style="left:510px;top:586px;width:1px;height:237px;background:#fff;"></div>
<div style="left:661px;top:229px;width:1px;height:357px;background:#a8f0ff;"></div>
<div style="left:661px;top:586px;width:1px;height:237px;background:#fff;"></div>
<div style="left:720px;top:229px;width:1px;height:357px;background:#a8f0ff;"></div>
<div style="left:720px;top:586px;width:1px;height:237px;background:#fff;"></div>
<div style="left:926px;top:229px;width:1px;height:357px;background:#a8f0ff;"></div>
<div style="left:926px;top:586px;width:1px;height:237px;background:#fff;"></div>
<div style="left:1077px;top:229px;width:1px;height:357px;background:#a8f0ff;"></div>
<div style="left:1077px;top:586px;width:1px;height:237px;background:#fff;"></div>
<div style="left:1106px;top:229px;width:1px;height:357px;background:#a8f0ff;"></div>
<div style="left:1106px;top:586px;width:1px;height:237px;background:#fff;"></div>
<div style="left:1190px;top:229px;width:1px;height:357px;background:#a8f0ff;"></div>
<div style="left:1190px;top:586px;width:1px;height:237px;background:#fff;"></div>
<div style="left:1289px;top:229px;width:1px;height:357px;background:#a8f0ff;"></div>
<div style="left:1289px;top:586px;width:1px;height:237px;background:#fff;"></div>
<div style="left:1337px;top:229px;width:1px;height:357px;background:#a8f0ff;"></div>
<div style="left:1337px;top:586px;width:1px;height:237px;background:#fff;"></div>
<div style="left:231px;top:229px;width:1px;height:357px;background:#a8f0ff;"></div>
<div style="left:231px;top:348px;width:1169px;height:1px;background:repeating-linear-gradient(to right,#d0f4ff 0,#d0f4ff 1px,#2860a0 1px,#2860a0 2px);"></div>
<div style="left:232px;top:348px;width:1px;height:16px;background:repeating-linear-gradient(to bottom,#d0f4ff 0,#d0f4ff 1px,#2860a0 1px,#2860a0 2px);"></div>
<div style="left:1400px;top:204px;width:18px;height:636px;background:#f0f0f0;"></div>
<div style="left:1401px;top:222px;width:16px;height:71px;background:#cdcdcd;"></div>
<svg style="left:1404.5px;top:210.5px;" width="9" height="7" viewBox="0 0 9 7"><path d="M1 5.500L4.500 2L8 5.500" fill="none" stroke="#505050" stroke-width="2"/></svg>
<svg style="left:1404.5px;top:810.5px;" width="9" height="7" viewBox="0 0 9 7"><path d="M1 1.500L4.500 5L8 1.500" fill="none" stroke="#606060" stroke-width="2"/></svg>
<div style="left:210px;top:823px;width:1190px;height:16px;background:#f0f0f0;"></div>
<div style="left:228px;top:823px;width:848px;height:15px;background:#cdcdcd;"></div>
<svg style="left:215.5px;top:826px;" width="7" height="9" viewBox="0 0 7 9"><path d="M5.500 1L2 4.500L5.500 8" fill="none" stroke="#505050" stroke-width="2"/></svg>
<svg style="left:1388.5px;top:826px;" width="7" height="9" viewBox="0 0 7 9"><path d="M1.500 1L5 4.500L1.500 8" fill="none" stroke="#606060" stroke-width="2"/></svg>
<div style="left:210px;top:839px;width:1208px;height:1px;background:#fff;"></div>
<div style="left:0px;top:841px;width:1419px;height:15px;background:#f0f0f0;"></div>
<div style="left:0px;top:855px;width:1419px;height:1px;background:#e0f2fa;"></div>
<span class="t" style="left:-0.22px;top:842.75px;font-size:12.5px;color:#000;transform:scaleX(0.8838);transform-origin:0 0;">idelis Personal Applicationserver (Demo) (tcp://VS-TEST7:31002/login) @DEMO</span>
<span class="t" style="right:86.49px;top:842.75px;font-size:12.5px;color:#000;transform:scaleX(0.9205);transform-origin:100% 0;">21 / 277</span>
<div style="left:1340px;top:842px;width:78px;height:13px;background:#cdcdcd;"></div>
<span class="t" style="left:1354.00px;top:842.75px;font-size:12.5px;color:#8e8e8e;transform:scaleX(0.8659);transform-origin:0 0;">Alle Daten</span>
<div style="left:0px;top:856px;width:1425px;height:8px;background:#fff;"></div>
<div style="left:0px;top:856px;width:949px;height:8px;background:#91274a;"></div>
<svg style="left:940px;top:856px;" width="116" height="8" viewBox="0 0 116 8"><path d="M7 0H110L108 8H8.400z" fill="#de4b08"/></svg>
<div style="left:0px;top:856px;width:1420px;height:1px;background:#4a6e8e;opacity:.9;"></div>
<div style="left:0px;top:857px;width:1051px;height:1px;background:#41698f;opacity:.4;"></div>
<div style="left:509px;top:342px;width:342px;height:524px;background:#f2f2f2;border:1px solid #dcdcdc;"></div>
<span class="t" style="left:543.96px;top:350.00px;font-size:12px;color:#000;transform:scaleX(0.9749);transform-origin:0 0;">Bearbeiten...</span>
<span class="t" style="right:594.71px;top:350.00px;font-size:12px;color:#000;transform:scaleX(0.9838);transform-origin:100% 0;">Strg+B</span>
<span class="t" style="left:543.93px;top:372.00px;font-size:12px;color:#000;transform:scaleX(1.0100);transform-origin:0 0;">Neu...</span>
<span class="t" style="right:594.37px;top:372.00px;font-size:12px;color:#000;transform:scaleX(1.0265);transform-origin:100% 0;">Strg+N</span>
<div style="left:540px;top:392px;width:308px;height:1px;background:#d7d7d7;"></div>
<span class="t" style="left:543.96px;top:401.00px;font-size:12px;color:#000;transform:scaleX(0.9786);transform-origin:0 0;">Löschen...</span>
<span class="t" style="right:595.31px;top:401.00px;font-size:12px;color:#000;transform:scaleX(1.0098);transform-origin:100% 0;">Entf</span>
<div style="left:540px;top:421px;width:308px;height:1px;background:#d7d7d7;"></div>
<span class="t" style="left:543.96px;top:430.00px;font-size:12px;color:#000;transform:scaleX(0.9842);transform-origin:0 0;">Berichte...</span>
<span class="t" style="left:544.38px;top:452.00px;font-size:12px;color:#000;transform:scaleX(0.9612);transform-origin:0 0;">Serienbriefe...</span>
<span class="t" style="left:544.38px;top:474.00px;font-size:12px;color:#000;transform:scaleX(0.9685);transform-origin:0 0;">Serienberichte...</span>
<div style="left:540px;top:494px;width:308px;height:1px;background:#d7d7d7;"></div>
<span class="t" style="left:544.90px;top:503.00px;font-size:12px;color:#000;transform:scaleX(0.9885);transform-origin:0 0;">Aktualisieren</span>
<span class="t" style="right:594.85px;top:503.00px;font-size:12px;color:#000;transform:scaleX(0.8931);transform-origin:100% 0;">F5</span>
<span class="t" style="left:544.90px;top:525.00px;font-size:12px;color:#000;transform:scaleX(0.9700);transform-origin:0 0;">Alles auswählen</span>
<span class="t" style="right:595.30px;top:525.00px;font-size:12px;color:#000;transform:scaleX(0.9923);transform-origin:100% 0;">Strg+A</span>
<span class="t" style="left:543.96px;top:547.00px;font-size:12px;color:#000;transform:scaleX(0.9755);transform-origin:0 0;">Keine auswählen</span>
<div style="left:540px;top:567px;width:308px;height:1px;background:#d7d7d7;"></div>
<span class="t" style="left:543.95px;top:576.00px;font-size:12px;color:#000;transform:scaleX(0.9859);transform-origin:0 0;">Favoriten...</span>
<span class="t" style="left:544.31px;top:598.00px;font-size:12px;color:#000;transform:scaleX(0.9825);transform-origin:0 0;">Gruppieren...</span>
<div style="left:540px;top:618px;width:308px;height:1px;background:#d7d7d7;"></div>
<span class="t" style="left:544.38px;top:627.00px;font-size:12px;color:#000;transform:scaleX(0.9606);transform-origin:0 0;">Selektieren für PKP...</span>
<span class="t" style="left:543.96px;top:649.00px;font-size:12px;color:#8a8a8a;transform:scaleX(0.9784);transform-origin:0 0;">Erhöhen für PKP...</span>
<div style="left:540px;top:669px;width:308px;height:1px;background:#d7d7d7;"></div>
<span class="t" style="left:543.96px;top:678.00px;font-size:12px;color:#000;transform:scaleX(0.9824);transform-origin:0 0;">Personen übertragen</span>
<svg style="left:833px;top:679px;" width="7" height="10" viewBox="0 0 7 10"><path d="M1.500 1L5.500 5L1.500 9" fill="none" stroke="#3a3a3a" stroke-width="1.100"/></svg>
<div style="left:540px;top:698px;width:308px;height:1px;background:#d7d7d7;"></div>
<span class="t" style="left:543.97px;top:707.00px;font-size:12px;color:#000;transform:scaleX(0.9701);transform-origin:0 0;">Kurzerfassung</span>
<svg style="left:833px;top:708px;" width="7" height="10" viewBox="0 0 7 10"><path d="M1.500 1L5.500 5L1.500 9" fill="none" stroke="#3a3a3a" stroke-width="1.100"/></svg>
<div style="left:540px;top:727px;width:308px;height:1px;background:#d7d7d7;"></div>
<span class="t" style="left:543.96px;top:736.00px;font-size:12px;color:#000;transform:scaleX(0.9764);transform-origin:0 0;">Export nach...</span>
<svg style="left:833px;top:737px;" width="7" height="10" viewBox="0 0 7 10"><path d="M1.500 1L5.500 5L1.500 9" fill="none" stroke="#3a3a3a" stroke-width="1.100"/></svg>
<div style="left:540px;top:756px;width:308px;height:1px;background:#d7d7d7;"></div>
<span class="t" style="left:543.97px;top:765.00px;font-size:12px;color:#000;transform:scaleX(1.0314);transform-origin:0 0;">Urlaubsermittlung</span>
<div style="left:540px;top:785px;width:308px;height:1px;background:#d7d7d7;"></div>
<span class="t" style="left:544.66px;top:794.00px;font-size:12px;color:#000;transform:scaleX(0.9896);transform-origin:0 0;">Testabrechnung...</span>
<div style="left:540px;top:814px;width:308px;height:1px;background:#d7d7d7;"></div>
<span class="t" style="left:543.96px;top:823.00px;font-size:12px;color:#000;transform:scaleX(0.9817);transform-origin:0 0;">Mitarbeiter-Benutzer aus Person anlegen</span>
<div style="left:540px;top:843px;width:308px;height:1px;background:#d7d7d7;"></div>
<span class="t" style="left:544.42px;top:852.00px;font-size:12px;color:#000;transform:scaleX(0.9941);transform-origin:0 0;">elektronische Entgeltbescheinigung ...</span>
<span class="t" style="left:1419.66px;top:781.50px;font-size:10px;color:#5a6470;transform:scaleX(0.8000);transform-origin:0 0;">R</span>
<svg style="left:1420px;top:751px;" width="4" height="8" viewBox="0 0 4 8"><path d="M.5 7L3 .5" stroke="#8a96a4" stroke-width="1"/></svg>
<svg style="left:1420px;top:771px;" width="4" height="5" viewBox="0 0 4 5"><path d="M.3 .5L3 3.500" stroke="#98a4b0" stroke-width="1"/></svg>
</div></body></html>
